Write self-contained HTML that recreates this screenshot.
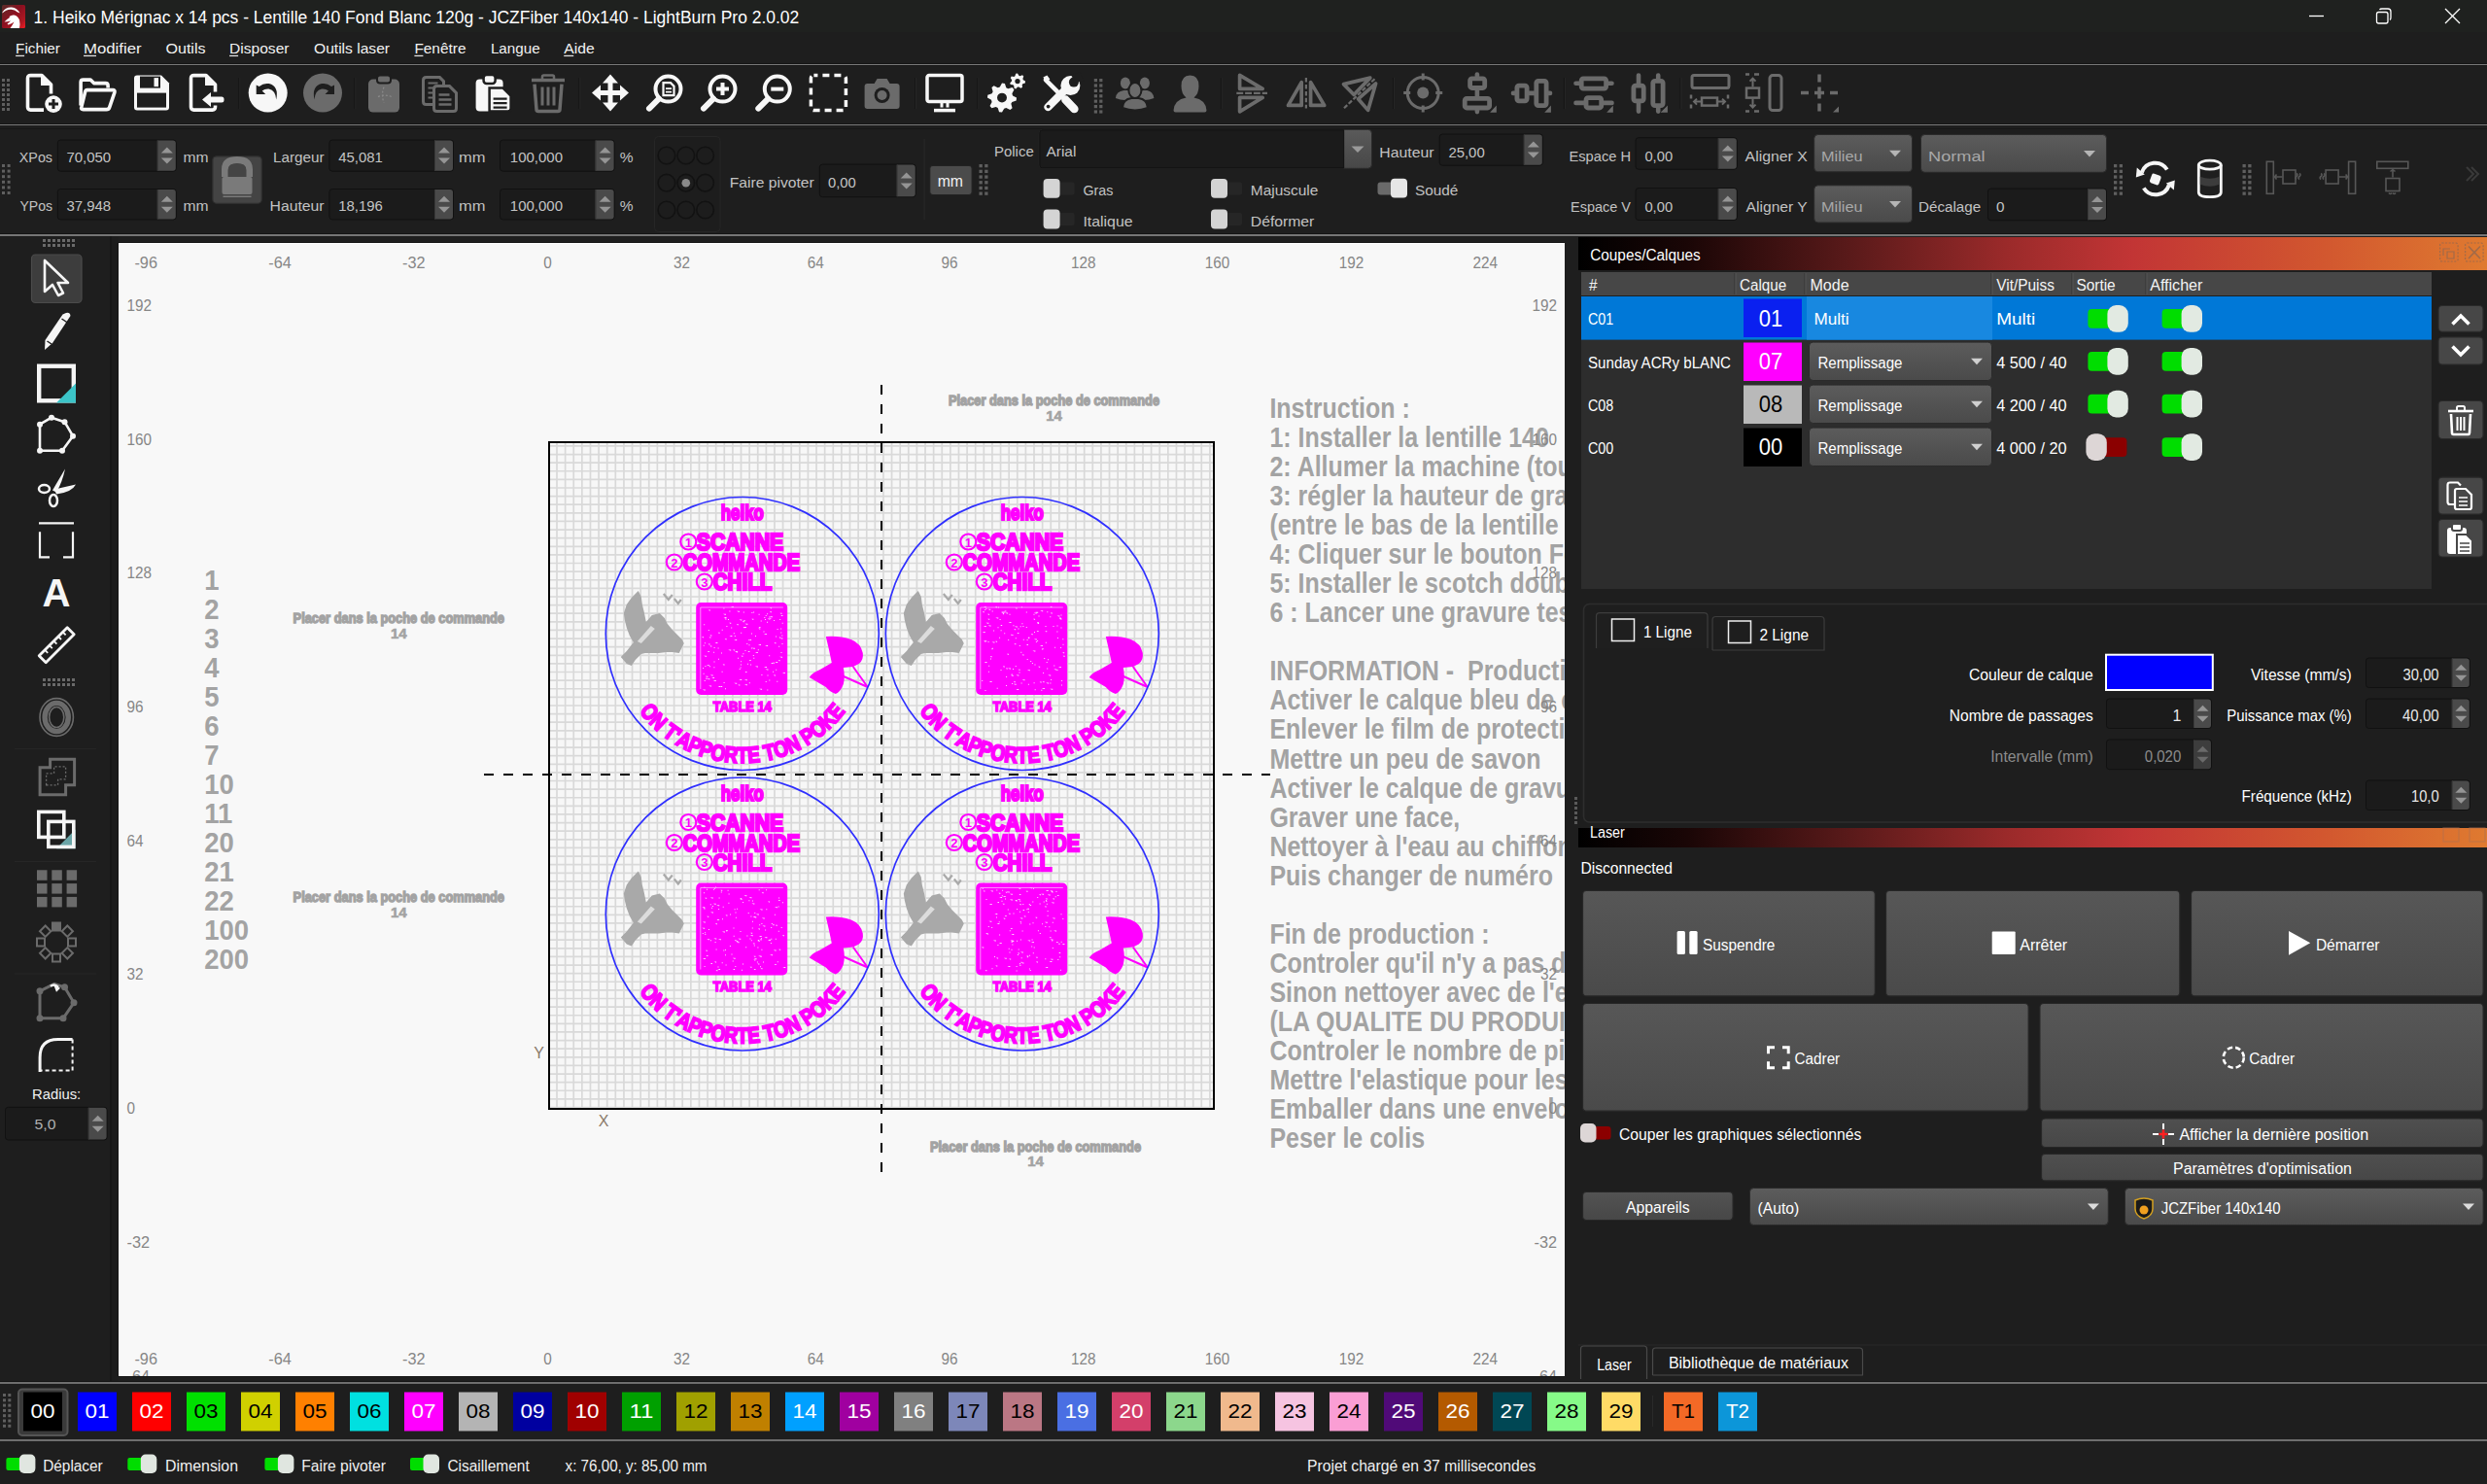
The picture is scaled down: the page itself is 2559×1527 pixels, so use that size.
<!DOCTYPE html>
<html><head><meta charset="utf-8"><title>LightBurn</title>
<style>html,body{margin:0;padding:0;background:#1e1e1e;overflow:hidden;width:2559px;height:1527px}
svg{display:block} text{font-family:"Liberation Sans", sans-serif;white-space:pre}</style></head>
<body><svg width="2559" height="1527" viewBox="0 0 2559 1527">
<rect x="0" y="0" width="2559" height="1527" fill="#1e1e1e" />
<rect x="0" y="0" width="2559" height="33" fill="#1f211f" />
<defs><linearGradient id="appg" x1="0" y1="0" x2="1" y2="1"><stop offset="0" stop-color="#5a2e2a"/><stop offset="0.45" stop-color="#8a1020"/><stop offset="0.8" stop-color="#b01822"/><stop offset="1" stop-color="#f41c24"/></linearGradient></defs>
<rect x="2" y="5" width="24" height="24" fill="url(#appg)" rx="1.5" />
<path d="M2.5 12.5 Q6 7 12 7.5 Q17.5 8 20.5 13.5 L18 12.5 Q15 9.5 11 9.7 Q6 10 2.5 13.5 Z" fill="#ffffff" />
<path d="M10.5 29 Q13 25.5 14.5 22.5 Q12 24.5 8.5 25.5 L7.5 24.5 Q10 22.5 11 21.5 Q8 22.5 4.5 22.5 Q7 19.5 10 18 L9.5 17 Q12 15 14.5 15.5 Q18 16 20 20.5 Q21 25 20 29 Z" fill="#ffffff" />
<text x="34.6" y="24" font-size="18" fill="#ffffff" textLength="787.7" lengthAdjust="spacingAndGlyphs" >1. Heiko Mérignac x 14 pcs - Lentille 140 Fond Blanc 120g - JCZFiber 140x140 - LightBurn Pro 2.0.02</text>
<line x1="2376" y1="16.5" x2="2391" y2="16.5" stroke="#ffffff" stroke-width="1.3" />
<rect x="2445.5" y="12.5" width="11.5" height="11.5" fill="none" rx="2" stroke="#ffffff" stroke-width="1.3" />
<path d="M2448.5 10 Q2449 9 2451 9 L2457 9 Q2460 9 2460 12 L2460 18 Q2460 20 2459 20.5" fill="none" stroke="#ffffff" stroke-width="1.3" />
<line x1="2516" y1="9" x2="2531" y2="24" stroke="#ffffff" stroke-width="1.3" />
<line x1="2531" y1="9" x2="2516" y2="24" stroke="#ffffff" stroke-width="1.3" />
<text x="16.1" y="54.7" font-size="15.5" fill="#f2f2f2" textLength="45.8" lengthAdjust="spacingAndGlyphs" >Fichier</text>
<rect x="16.1" y="56.8" width="9" height="1.3" fill="#e0e0e0" />
<text x="86" y="54.7" font-size="15.5" fill="#f2f2f2" textLength="59.6" lengthAdjust="spacingAndGlyphs" >Modifier</text>
<rect x="86" y="56.8" width="13" height="1.3" fill="#e0e0e0" />
<text x="170.5" y="54.7" font-size="15.5" fill="#f2f2f2" textLength="41.0" lengthAdjust="spacingAndGlyphs" >Outils</text>
<text x="236.1" y="54.7" font-size="15.5" fill="#f2f2f2" textLength="61.4" lengthAdjust="spacingAndGlyphs" >Disposer</text>
<rect x="236.1" y="56.8" width="9" height="1.3" fill="#e0e0e0" />
<text x="323" y="54.7" font-size="15.5" fill="#f2f2f2" textLength="78" lengthAdjust="spacingAndGlyphs" >Outils laser</text>
<text x="426.4" y="54.7" font-size="15.5" fill="#f2f2f2" textLength="53.1" lengthAdjust="spacingAndGlyphs" >Fenêtre</text>
<rect x="426.4" y="56.8" width="9" height="1.3" fill="#e0e0e0" />
<text x="504.9" y="54.7" font-size="15.5" fill="#f2f2f2" textLength="50.7" lengthAdjust="spacingAndGlyphs" >Langue</text>
<text x="580.2" y="54.7" font-size="15.5" fill="#f2f2f2" textLength="31.5" lengthAdjust="spacingAndGlyphs" >Aide</text>
<rect x="580.2" y="56.8" width="10" height="1.3" fill="#e0e0e0" />
<rect x="0" y="65" width="2559" height="1" fill="#161616" />
<rect x="0" y="66" width="2559" height="1" fill="#7a7a7a" />
<rect x="0" y="67" width="2559" height="1" fill="#171717" />
<rect x="0" y="127" width="2559" height="1" fill="#161616" />
<rect x="0" y="128" width="2559" height="1" fill="#7a7a7a" />
<rect x="0" y="132" width="2559" height="1" fill="#171717" />
<rect x="0" y="240" width="2559" height="1" fill="#141414" />
<rect x="0" y="241" width="2559" height="2" fill="#767676" />
<rect x="113" y="243" width="2" height="1178" fill="#171717" />
<rect x="0" y="1421" width="2559" height="1" fill="#141414" />
<rect x="0" y="1422" width="2559" height="2" fill="#6e6e6e" />
<rect x="0" y="1481" width="2559" height="2" fill="#6e6e6e" />
<rect x="2" y="81" width="3" height="3" fill="#5f5f5f" />
<rect x="7" y="81" width="3" height="3" fill="#5f5f5f" />
<rect x="2" y="86" width="3" height="3" fill="#5f5f5f" />
<rect x="7" y="86" width="3" height="3" fill="#5f5f5f" />
<rect x="2" y="91" width="3" height="3" fill="#5f5f5f" />
<rect x="7" y="91" width="3" height="3" fill="#5f5f5f" />
<rect x="2" y="96" width="3" height="3" fill="#5f5f5f" />
<rect x="7" y="96" width="3" height="3" fill="#5f5f5f" />
<rect x="2" y="101" width="3" height="3" fill="#5f5f5f" />
<rect x="7" y="101" width="3" height="3" fill="#5f5f5f" />
<rect x="2" y="106" width="3" height="3" fill="#5f5f5f" />
<rect x="7" y="106" width="3" height="3" fill="#5f5f5f" />
<rect x="2" y="111" width="3" height="3" fill="#5f5f5f" />
<rect x="7" y="111" width="3" height="3" fill="#5f5f5f" />
<g transform="translate(24,75.6) scale(1)"><path d="M4.5 5 Q4.5 2 7.5 2 H19 L28.5 11.5 V21 M21 37.5 H7.5 Q4.5 37.5 4.5 34.5 V5" fill="none" stroke="#f7f7f7" stroke-width="3.6" stroke-linejoin="round"/><path d="M18 2 V12.5 H28.5 Z" fill="#f7f7f7"/><circle cx="31" cy="31.5" r="8.8" fill="#f7f7f7"/><path d="M31 26.5 V36.5 M26 31.5 H36" stroke="#1e1e1e" stroke-width="3"/></g>
<g transform="translate(79.6,75.6) scale(1)"><path d="M3.5 33 V9 Q3.5 6.5 6 6.5 H13.5 L17 10 H29 Q31.5 10 31.5 12.5 V15" fill="none" stroke="#f7f7f7" stroke-width="3.6" stroke-linejoin="round"/><path d="M10 17 H36.5 Q39 17 38.3 19.5 L33 35 Q32.3 37 30 37 H6 Q3.3 37 4.2 34.5 L8 19 Q8.6 17 10 17 Z" fill="none" stroke="#f7f7f7" stroke-width="3.6" stroke-linejoin="round"/></g>
<g transform="translate(136,75.6) scale(1)"><path d="M2 5 Q2 2 5 2 H30 L38 10 V35 Q38 38 35 38 H5 Q2 38 2 35 Z" fill="#f7f7f7"/><rect x="8" y="3" width="21" height="12" fill="#1e1e1e"/><rect x="22.5" y="4.5" width="4.5" height="9" fill="#f7f7f7"/><rect x="5" y="20" width="30" height="15" fill="#1e1e1e"/></g>
<g transform="translate(192,75.6) scale(1)"><path d="M4.5 5 Q4.5 2 7.5 2 H20 L29.5 11.5 V19 M29.5 33 V34.5 Q29.5 37.5 26.5 37.5 H7.5 Q4.5 37.5 4.5 34.5 V5" fill="none" stroke="#f7f7f7" stroke-width="3.6" stroke-linejoin="round"/><path d="M19 2 V12.5 H29.5 Z" fill="#f7f7f7"/><path d="M16 27 L25 19.5 V24 H36 Q38.5 24 38.5 26.5 V27.5 Q38.5 30 36 30 H25 V34.5 Z" fill="#f7f7f7"/></g>
<g transform="translate(255.7,75.6) scale(1)"><circle cx="20" cy="20" r="20" fill="#f7f7f7"/><path d="M8 12 V21.5 H17.5 L14 18 Q17 15.5 21 16 Q28 17.5 28.5 27 Q31.5 13 21 10.5 Q15.5 9.5 11 13.5 Z" fill="#1e1e1e"/></g>
<g transform="translate(312,75.6) scale(1)"><circle cx="20" cy="20" r="20" fill="#6b6b6b"/><path d="M32 12 V21.5 H22.5 L26 18 Q23 15.5 19 16 Q12 17.5 11.5 27 Q8.5 13 19 10.5 Q24.5 9.5 29 13.5 Z" fill="#1e1e1e"/></g>
<g transform="translate(376,75.6) scale(1)"><rect x="3" y="6" width="32" height="34" rx="5" fill="#6b6b6b"/><rect x="12" y="2" width="14" height="8" rx="3" fill="#6b6b6b" stroke="#1e1e1e" stroke-width="2"/><path d="M19 14 Q16 22 19 30 M13 24 Q20 21 27 24" stroke="#8a8a8a" stroke-width="1.2" fill="none" stroke-dasharray="2 2"/></g>
<g transform="translate(432.5,75.6) scale(1)"><path d="M6 4 H20 L24 8 V12 M14 32 H6 Q3 32 3 29 V7 Q3 4 6 4" fill="none" stroke="#6b6b6b" stroke-width="3"/><path d="M8 10 H18 M8 15 H15 M8 20 H13 M8 25 H13" stroke="#6b6b6b" stroke-width="2"/><path d="M17 13 H30 L37 20 V36 Q37 39 34 39 H17 Q14 39 14 36 V16 Q14 13 17 13 Z" fill="none" stroke="#6b6b6b" stroke-width="3"/><path d="M19 22 H30 M19 27 H32 M19 32 H32" stroke="#6b6b6b" stroke-width="2.5"/></g>
<g transform="translate(488.6,75.6) scale(1)"><rect x="1" y="6" width="28" height="33" rx="4" fill="#f7f7f7"/><rect x="9" y="1.5" width="12" height="9" rx="3" fill="#f7f7f7" stroke="#1e1e1e" stroke-width="2.5"/><path d="M15 15 H29 L37 23 V36 Q37 39 34 39 H15 Z" fill="#f7f7f7" stroke="#1e1e1e" stroke-width="2.5"/><path d="M19 26 H33 M19 30.5 H33 M19 35 H33" stroke="#1e1e1e" stroke-width="2.2"/></g>
<g transform="translate(545,75.6) scale(1)"><path d="M2 7 H36" stroke="#6b6b6b" stroke-width="3.5"/><path d="M13 7 V3.5 Q13 2 14.5 2 H23.5 Q25 2 25 3.5 V7" fill="none" stroke="#6b6b6b" stroke-width="2.5"/><path d="M5 11 L7 37 Q7 39 9 39 H29 Q31 39 31 37 L33 11" fill="none" stroke="#6b6b6b" stroke-width="3.5"/><path d="M13 14 V33 M19 14 V33 M25 14 V33" stroke="#6b6b6b" stroke-width="3"/></g>
<g transform="translate(608,75.6) scale(1)"><path d="M20 1 L28 10 H22.5 V17.5 H30 V12 L39 20 L30 28 V22.5 H22.5 V30 H28 L20 39 L12 30 H17.5 V22.5 H10 V28 L1 20 L10 12 V17.5 H17.5 V10 H12 Z" fill="#f7f7f7"/></g>
<g transform="translate(664,75.6) scale(1)"><circle cx="23.5" cy="16" r="13" fill="none" stroke="#f7f7f7" stroke-width="4"/><path d="M14 26 L4 36" stroke="#f7f7f7" stroke-width="6" stroke-linecap="round"/><path d="M18.5 9.5 H26 L29.5 13 V22.5 H18.5 Z" fill="none" stroke="#f7f7f7" stroke-width="2.2"/><path d="M21 15.5 H27 M21 19 H27" stroke="#f7f7f7" stroke-width="1.8"/></g>
<g transform="translate(720,75.6) scale(1)"><circle cx="23.5" cy="16" r="13" fill="none" stroke="#f7f7f7" stroke-width="4"/><path d="M14 26 L4 36" stroke="#f7f7f7" stroke-width="6" stroke-linecap="round"/><path d="M23.5 9.5 V22.5 M17 16 H30" stroke="#f7f7f7" stroke-width="4"/></g>
<g transform="translate(776.3,75.6) scale(1)"><circle cx="23.5" cy="16" r="13" fill="none" stroke="#f7f7f7" stroke-width="4"/><path d="M14 26 L4 36" stroke="#f7f7f7" stroke-width="6" stroke-linecap="round"/><path d="M17 16 H30" stroke="#f7f7f7" stroke-width="4"/></g>
<g transform="translate(832.4,75.6) scale(1)"><rect x="2" y="2" width="36" height="36" rx="3" fill="none" stroke="#f7f7f7" stroke-width="3.5" stroke-dasharray="7 5" stroke-dashoffset="3"/></g>
<g transform="translate(887.6,78) scale(1)"><path d="M2 11 Q2 8 5 8 H12 L15 3 H25 L28 8 H35 Q38 8 38 11 V31 Q38 34 35 34 H5 Q2 34 2 31 Z" fill="#6b6b6b"/><circle cx="20" cy="20" r="8" fill="#1e1e1e"/><circle cx="20" cy="20" r="5" fill="#6b6b6b"/></g>
<g transform="translate(952,75.6) scale(1)"><rect x="2" y="2" width="36" height="27" rx="2" fill="none" stroke="#f7f7f7" stroke-width="3.5"/><path d="M17 30 V35 M23 30 V35" stroke="#f7f7f7" stroke-width="3"/><path d="M9 38 H31" stroke="#f7f7f7" stroke-width="3.5"/></g>
<g transform="translate(1015,75.6) scale(1)"><path d="M31.00 25.00 L30.71 27.93 L26.39 29.31 L25.35 31.25 L26.61 35.61 L24.33 37.47 L20.31 35.39 L18.19 36.03 L16.00 40.00 L13.07 39.71 L11.69 35.39 L9.75 34.35 L5.39 35.61 L3.53 33.33 L5.61 29.31 L4.97 27.19 L1.00 25.00 L1.29 22.07 L5.61 20.69 L6.65 18.75 L5.39 14.39 L7.67 12.53 L11.69 14.61 L13.81 13.97 L16.00 10.00 L18.93 10.29 L20.31 14.61 L22.25 15.65 L26.61 14.39 L28.47 16.67 L26.39 20.69 L27.03 22.81 Z" fill="#f7f7f7"/><circle cx="16" cy="25" r="4.95" fill="#1e1e1e"/><path d="M40.00 8.00 L39.80 9.78 L37.41 10.60 L36.69 11.74 L36.99 14.25 L35.47 15.21 L33.34 13.85 L32.00 14.00 L30.22 15.80 L28.53 15.21 L28.26 12.69 L27.31 11.74 L24.79 11.47 L24.20 9.78 L26.00 8.00 L26.15 6.66 L24.79 4.53 L25.75 3.01 L28.26 3.31 L29.40 2.59 L30.22 0.20 L32.00 0.00 L33.34 2.15 L34.60 2.59 L36.99 1.75 L38.25 3.01 L37.41 5.40 L37.85 6.66 Z" fill="#f7f7f7"/><circle cx="32" cy="8" r="2.64" fill="#1e1e1e"/></g>
<g transform="translate(1071.4,75.6) scale(1)"><path d="M4.5 6.5 L22 24" stroke="#f7f7f7" stroke-width="4.5" stroke-linecap="round"/><path d="M2 4 L6 2 L9 6 L5 9 Z" fill="#f7f7f7"/><path d="M25 27 L34 36.5" stroke="#f7f7f7" stroke-width="8.5" stroke-linecap="round"/><path d="M7 34.5 L25 16.5" stroke="#f7f7f7" stroke-width="8" stroke-linecap="round"/><circle cx="30" cy="12.5" r="10" fill="#f7f7f7"/><circle cx="33.5" cy="9" r="5" fill="#1e1e1e"/><path d="M33.5 9 L31 1 L40 -1 L44 8 Z" fill="#1e1e1e"/><circle cx="7.2" cy="34" r="1.9" fill="#1e1e1e"/></g>
<g transform="translate(1147.4,78) scale(1)"><ellipse cx="10.5" cy="7.5" rx="5" ry="6" fill="#6b6b6b"/><path d="M0.5 23 Q1 16 9 15 L13 15 Q19 16 20 23 Q10 27 0.5 23 Z" fill="#6b6b6b"/><ellipse cx="30.5" cy="7.5" rx="5" ry="6" fill="#6b6b6b"/><path d="M20.5 23 Q21 16 29 15 L33 15 Q39 16 40 23 Q30 27 20.5 23 Z" fill="#6b6b6b"/><ellipse cx="20.5" cy="15" rx="6.5" ry="8" stroke="#1e1e1e" stroke-width="2" fill="#6b6b6b"/><path d="M7.5 33 Q8 24 17 23 L24 23 Q33 24 33.5 33 Q20.5 38 7.5 33 Z" fill="#6b6b6b" stroke="#1e1e1e" stroke-width="2"/></g>
<g transform="translate(1206.5,75.6) scale(1)"><path d="M18 2 Q27 2 27 13 Q27 21 22 25 Q34 27 35 38 Q35 40 33 40 H3 Q1 40 1 38 Q2 27 14 25 Q9 21 9 13 Q9 2 18 2 Z" fill="#6b6b6b"/></g>
<g transform="translate(1272,75.6) scale(1)"><path d="M3.6 1.8 L27.2 15.7 H3.6 Z M3.6 39.2 L27.2 24.8 H3.6 Z" fill="none" stroke="#6b6b6b" stroke-width="3.7" stroke-linejoin="round"/><path d="M0.3 20.3 H32" stroke="#6b6b6b" stroke-width="2.3" stroke-dasharray="6.9 1.9"/></g>
<g transform="translate(1323.7,75.6) scale(1)"><path d="M15.5 9 V32.8 H1.8 Z M24.9 9 V32.8 H39 Z" fill="none" stroke="#6b6b6b" stroke-width="3.7" stroke-linejoin="round"/><path d="M20.2 4.5 V36" stroke="#6b6b6b" stroke-width="2.2" stroke-dasharray="4.5 2.4"/></g>
<g transform="translate(1381.7,75.6) scale(1)"><path d="M0.8 11 L28.1 4.5 L11.4 21.9 Z M33.9 10.3 L25.9 37.8 L15.8 26.2 Z" fill="none" stroke="#6b6b6b" stroke-width="3.7" stroke-linejoin="round"/><path d="M1.3 35.6 L33.9 4.5" stroke="#6b6b6b" stroke-width="2.2" stroke-dasharray="4.5 2"/></g>
<g transform="translate(1444.2,75.6) scale(1)"><circle cx="20" cy="20" r="16" fill="none" stroke="#6b6b6b" stroke-width="3"/><circle cx="20" cy="20" r="6" fill="#6b6b6b"/><path d="M20 0 V7 M20 33 V40 M0 20 H7 M33 20 H40" stroke="#6b6b6b" stroke-width="3"/></g>
<g transform="translate(1502,75.6) scale(1)"><path d="M17.9 1 V39.5" stroke="#6b6b6b" stroke-width="4.6" stroke-linecap="round"/><rect x="10.6" y="5.2" width="15.1" height="9.7" rx="2" fill="#1e1e1e" stroke="#6b6b6b" stroke-width="4.8"/><rect x="5.2" y="25.8" width="25.4" height="9.6" rx="2" fill="#1e1e1e" stroke="#6b6b6b" stroke-width="4.8"/><path d="M31.1 40.2 L37.8 33 V40.2 Z" fill="#6b6b6b"/></g>
<g transform="translate(1556,75.6) scale(1)"><path d="M1 20.3 H39" stroke="#6b6b6b" stroke-width="4.6" stroke-linecap="round"/><rect x="4.9" y="12.5" width="10.2" height="15.7" rx="2" fill="#1e1e1e" stroke="#6b6b6b" stroke-width="4.8"/><rect x="24.8" y="7.7" width="10.3" height="25.3" rx="2" fill="#1e1e1e" stroke="#6b6b6b" stroke-width="4.8"/><path d="M33.2 40.2 L39.9 33 V40.2 Z" fill="#6b6b6b"/></g>
<g transform="translate(1620,75.6) scale(1)"><path d="M1.5 10.1 H38.5 M1.5 30.3 H38.5" stroke="#6b6b6b" stroke-width="4.6" stroke-linecap="round"/><rect x="7.2" y="5.2" width="25.4" height="10.3" rx="2" fill="#1e1e1e" stroke="#6b6b6b" stroke-width="4.8"/><rect x="12" y="25.1" width="15.7" height="10.3" rx="2" fill="#1e1e1e" stroke="#6b6b6b" stroke-width="4.8"/><path d="M33.2 40.2 L39.8 33 V40.2 Z" fill="#6b6b6b"/></g>
<g transform="translate(1677,75.6) scale(1)"><path d="M9 2 V39 M29.2 2 V39" stroke="#6b6b6b" stroke-width="4.6" stroke-linecap="round"/><rect x="3.9" y="12.5" width="10.3" height="15.7" rx="2" fill="#1e1e1e" stroke="#6b6b6b" stroke-width="4.8"/><rect x="23.8" y="7.7" width="10.3" height="25.3" rx="2" fill="#1e1e1e" stroke="#6b6b6b" stroke-width="4.8"/><path d="M31.6 40.2 L38.9 33 V40.2 Z" fill="#6b6b6b"/></g>
<g transform="translate(1739,75.6) scale(1)"><rect x="2" y="2" width="38" height="13" rx="2" fill="none" stroke="#6b6b6b" stroke-width="3"/><path d="M1 22 V26 M1 32 V36 M39 22 V26 M39 32 V36" stroke="#6b6b6b" stroke-width="2.5"/><rect x="12" y="25" width="16" height="8" fill="none" stroke="#6b6b6b" stroke-width="2.5"/><path d="M5 29 H11 M29 29 H35 M7 26 L4 29 L7 32 M33 26 L36 29 L33 32" stroke="#6b6b6b" stroke-width="2" fill="none"/></g>
<g transform="translate(1796,75.6) scale(1)"><path d="M0 1 H4 M9 1 H14 M0 39 H4 M9 39 H14" stroke="#6b6b6b" stroke-width="2.5"/><rect x="1" y="15" width="13" height="10" fill="none" stroke="#6b6b6b" stroke-width="2.5"/><path d="M7.5 5 V14 M7.5 26 V35 M4.5 8 L7.5 5 L10.5 8 M4.5 32 L7.5 35 L10.5 32" stroke="#6b6b6b" stroke-width="2" fill="none"/><rect x="25" y="2" width="12" height="36" rx="3" fill="none" stroke="#6b6b6b" stroke-width="3"/></g>
<g transform="translate(1852,75.6) scale(1)"><path d="M1 20 H9 M15 20 H25 M31 20 H39 M20 1 V9 M20 14 V26 M20 31 V39" stroke="#6b6b6b" stroke-width="3.5"/><path d="M34 40 L40 34 V40 Z" fill="#6b6b6b"/></g>
<rect x="245.3" y="80" width="1" height="32" fill="#151515" />
<rect x="246.3" y="80" width="1" height="32" fill="#262626" />
<rect x="364.3" y="80" width="1" height="32" fill="#151515" />
<rect x="365.3" y="80" width="1" height="32" fill="#262626" />
<rect x="595.4" y="80" width="1" height="32" fill="#151515" />
<rect x="596.4" y="80" width="1" height="32" fill="#262626" />
<rect x="941" y="80" width="1" height="32" fill="#151515" />
<rect x="942" y="80" width="1" height="32" fill="#262626" />
<rect x="1005.3" y="80" width="1" height="32" fill="#151515" />
<rect x="1006.3" y="80" width="1" height="32" fill="#262626" />
<rect x="1255.8" y="80" width="1" height="32" fill="#151515" />
<rect x="1256.8" y="80" width="1" height="32" fill="#262626" />
<rect x="1433" y="80" width="1" height="32" fill="#151515" />
<rect x="1434" y="80" width="1" height="32" fill="#262626" />
<rect x="1608.9" y="80" width="1" height="32" fill="#151515" />
<rect x="1609.9" y="80" width="1" height="32" fill="#262626" />
<rect x="1728.5" y="80" width="1" height="32" fill="#151515" />
<rect x="1729.5" y="80" width="1" height="32" fill="#262626" />
<rect x="1125.8" y="81.0" width="3.2" height="3.2" fill="#5f5f5f" />
<rect x="1131.2" y="81.0" width="3.2" height="3.2" fill="#5f5f5f" />
<rect x="1125.8" y="86.4" width="3.2" height="3.2" fill="#5f5f5f" />
<rect x="1131.2" y="86.4" width="3.2" height="3.2" fill="#5f5f5f" />
<rect x="1125.8" y="91.8" width="3.2" height="3.2" fill="#5f5f5f" />
<rect x="1131.2" y="91.8" width="3.2" height="3.2" fill="#5f5f5f" />
<rect x="1125.8" y="97.2" width="3.2" height="3.2" fill="#5f5f5f" />
<rect x="1131.2" y="97.2" width="3.2" height="3.2" fill="#5f5f5f" />
<rect x="1125.8" y="102.6" width="3.2" height="3.2" fill="#5f5f5f" />
<rect x="1131.2" y="102.6" width="3.2" height="3.2" fill="#5f5f5f" />
<rect x="1125.8" y="108.0" width="3.2" height="3.2" fill="#5f5f5f" />
<rect x="1131.2" y="108.0" width="3.2" height="3.2" fill="#5f5f5f" />
<rect x="1125.8" y="113.4" width="3.2" height="3.2" fill="#5f5f5f" />
<rect x="1131.2" y="113.4" width="3.2" height="3.2" fill="#5f5f5f" />
<rect x="2.0" y="169.0" width="3" height="3" fill="#5f5f5f" />
<rect x="7.6" y="169.0" width="3" height="3" fill="#5f5f5f" />
<rect x="2.0" y="174.6" width="3" height="3" fill="#5f5f5f" />
<rect x="7.6" y="174.6" width="3" height="3" fill="#5f5f5f" />
<rect x="2.0" y="180.2" width="3" height="3" fill="#5f5f5f" />
<rect x="7.6" y="180.2" width="3" height="3" fill="#5f5f5f" />
<rect x="2.0" y="185.8" width="3" height="3" fill="#5f5f5f" />
<rect x="7.6" y="185.8" width="3" height="3" fill="#5f5f5f" />
<rect x="2.0" y="191.4" width="3" height="3" fill="#5f5f5f" />
<rect x="7.6" y="191.4" width="3" height="3" fill="#5f5f5f" />
<rect x="2.0" y="197.0" width="3" height="3" fill="#5f5f5f" />
<rect x="7.6" y="197.0" width="3" height="3" fill="#5f5f5f" />
<text x="19.8" y="166.7" font-size="15.5" fill="#c2c2c2" textLength="34.2" lengthAdjust="spacingAndGlyphs" >XPos</text>
<text x="20.5" y="216.6" font-size="15.5" fill="#c2c2c2" textLength="33.5" lengthAdjust="spacingAndGlyphs" >YPos</text>
<rect x="59.3" y="144.0" width="122.00000000000001" height="32.19999999999999" fill="#1b1b1b" rx="3" stroke="#111111" stroke-width="1" />
<path d="M161.8 144.5 H177.8 Q180.8 144.5 180.8 147.5 V172.7 Q180.8 175.7 177.8 175.7 H161.8 Z" fill="#4a4a4a" />
<rect x="161.8" y="144.5" width="1" height="31.19999999999999" fill="#3a3a3a" />
<path d="M165.8 157.6 L171.8 151.6 L177.8 157.6 Z" fill="#959595" />
<path d="M165.8 162.6 L171.8 168.6 L177.8 162.6 Z" fill="#959595" />
<text x="68.4" y="166.7" font-size="15.5" fill="#c4c4c4" textLength="45.8" lengthAdjust="spacingAndGlyphs" >70,050</text>
<rect x="59.3" y="194.5" width="122.00000000000001" height="31.400000000000006" fill="#1b1b1b" rx="3" stroke="#111111" stroke-width="1" />
<path d="M161.8 195 H177.8 Q180.8 195 180.8 198 V222.4 Q180.8 225.4 177.8 225.4 H161.8 Z" fill="#4a4a4a" />
<rect x="161.8" y="195" width="1" height="30.400000000000006" fill="#3a3a3a" />
<path d="M165.8 207.7 L171.8 201.7 L177.8 207.7 Z" fill="#959595" />
<path d="M165.8 212.7 L171.8 218.7 L177.8 212.7 Z" fill="#959595" />
<text x="68.4" y="216.6" font-size="15.5" fill="#c4c4c4" textLength="45.8" lengthAdjust="spacingAndGlyphs" >37,948</text>
<text x="188.6" y="166.7" font-size="15.5" fill="#c2c2c2" textLength="26" lengthAdjust="spacingAndGlyphs" >mm</text>
<text x="188.6" y="216.6" font-size="15.5" fill="#c2c2c2" textLength="26" lengthAdjust="spacingAndGlyphs" >mm</text>
<rect x="218.8" y="160.8" width="50.5" height="48.5" fill="#444444" rx="4" stroke="#2e2e2e" stroke-width="1.2" />
<path d="M231.5 182 V174 Q231.5 164.5 244 164.5 Q256.5 164.5 256.5 174 V182" fill="none" stroke="#7a7a7a" stroke-width="7" />
<path d="M234.5 182 V175 Q234.5 168.5 244 168.5 Q253.5 168.5 253.5 175 V182" fill="#444444" />
<rect x="228.5" y="182" width="31" height="18" fill="#7a7a7a" rx="2" />
<rect x="229.5" y="201.5" width="29" height="1.5" fill="#7a7a7a" />
<text x="281" y="166.7" font-size="15.5" fill="#c2c2c2" textLength="52.6" lengthAdjust="spacingAndGlyphs" >Largeur</text>
<text x="277.5" y="216.6" font-size="15.5" fill="#c2c2c2" textLength="56.1" lengthAdjust="spacingAndGlyphs" >Hauteur</text>
<rect x="338.9" y="144.0" width="127.60000000000002" height="32.19999999999999" fill="#1b1b1b" rx="3" stroke="#111111" stroke-width="1" />
<path d="M447 144.5 H463 Q466 144.5 466 147.5 V172.7 Q466 175.7 463 175.7 H447 Z" fill="#4a4a4a" />
<rect x="447" y="144.5" width="1" height="31.19999999999999" fill="#3a3a3a" />
<path d="M451.0 157.6 L457.0 151.6 L463.0 157.6 Z" fill="#959595" />
<path d="M451.0 162.6 L457.0 168.6 L463.0 162.6 Z" fill="#959595" />
<text x="348.2" y="166.7" font-size="15.5" fill="#c4c4c4" textLength="45.6" lengthAdjust="spacingAndGlyphs" >45,081</text>
<rect x="338.9" y="194.5" width="127.60000000000002" height="31.400000000000006" fill="#1b1b1b" rx="3" stroke="#111111" stroke-width="1" />
<path d="M447 195 H463 Q466 195 466 198 V222.4 Q466 225.4 463 225.4 H447 Z" fill="#4a4a4a" />
<rect x="447" y="195" width="1" height="30.400000000000006" fill="#3a3a3a" />
<path d="M451.0 207.7 L457.0 201.7 L463.0 207.7 Z" fill="#959595" />
<path d="M451.0 212.7 L457.0 218.7 L463.0 212.7 Z" fill="#959595" />
<text x="348.2" y="216.6" font-size="15.5" fill="#c4c4c4" textLength="45.6" lengthAdjust="spacingAndGlyphs" >18,196</text>
<text x="472" y="166.7" font-size="15.5" fill="#c2c2c2" textLength="27.5" lengthAdjust="spacingAndGlyphs" >mm</text>
<text x="472" y="216.6" font-size="15.5" fill="#c2c2c2" textLength="27.5" lengthAdjust="spacingAndGlyphs" >mm</text>
<rect x="514.5" y="144.0" width="117.60000000000002" height="32.19999999999999" fill="#1b1b1b" rx="3" stroke="#111111" stroke-width="1" />
<path d="M612.6 144.5 H628.6 Q631.6 144.5 631.6 147.5 V172.7 Q631.6 175.7 628.6 175.7 H612.6 Z" fill="#4a4a4a" />
<rect x="612.6" y="144.5" width="1" height="31.19999999999999" fill="#3a3a3a" />
<path d="M616.6 157.6 L622.6 151.6 L628.6 157.6 Z" fill="#959595" />
<path d="M616.6 162.6 L622.6 168.6 L628.6 162.6 Z" fill="#959595" />
<text x="524.8" y="166.7" font-size="15.5" fill="#c4c4c4" textLength="54.2" lengthAdjust="spacingAndGlyphs" >100,000</text>
<rect x="514.5" y="194.5" width="117.60000000000002" height="31.400000000000006" fill="#1b1b1b" rx="3" stroke="#111111" stroke-width="1" />
<path d="M612.6 195 H628.6 Q631.6 195 631.6 198 V222.4 Q631.6 225.4 628.6 225.4 H612.6 Z" fill="#4a4a4a" />
<rect x="612.6" y="195" width="1" height="30.400000000000006" fill="#3a3a3a" />
<path d="M616.6 207.7 L622.6 201.7 L628.6 207.7 Z" fill="#959595" />
<path d="M616.6 212.7 L622.6 218.7 L628.6 212.7 Z" fill="#959595" />
<text x="524.8" y="216.6" font-size="15.5" fill="#c4c4c4" textLength="54.2" lengthAdjust="spacingAndGlyphs" >100,000</text>
<text x="637.7" y="166.7" font-size="15.5" fill="#c2c2c2" textLength="13.8" lengthAdjust="spacingAndGlyphs" >%</text>
<text x="637.7" y="216.6" font-size="15.5" fill="#c2c2c2" textLength="13.8" lengthAdjust="spacingAndGlyphs" >%</text>
<rect x="673.5" y="140.5" width="67.5" height="98" fill="#1d1d1d" rx="4" stroke="#262626" stroke-width="1" />
<circle cx="685.9" cy="160" r="8.8" fill="none" stroke="#121212" stroke-width="1.6"/>
<circle cx="685.9" cy="188.2" r="8.8" fill="none" stroke="#121212" stroke-width="1.6"/>
<circle cx="685.9" cy="216" r="8.8" fill="none" stroke="#121212" stroke-width="1.6"/>
<circle cx="705.8" cy="160" r="8.8" fill="none" stroke="#121212" stroke-width="1.6"/>
<circle cx="705.8" cy="188.2" r="8.8" fill="none" stroke="#121212" stroke-width="1.6"/>
<circle cx="705.8" cy="188.2" r="4.3" fill="#8a8a8a"/>
<circle cx="705.8" cy="216" r="8.8" fill="none" stroke="#121212" stroke-width="1.6"/>
<circle cx="725.6" cy="160" r="8.8" fill="none" stroke="#121212" stroke-width="1.6"/>
<circle cx="725.6" cy="188.2" r="8.8" fill="none" stroke="#121212" stroke-width="1.6"/>
<circle cx="725.6" cy="216" r="8.8" fill="none" stroke="#121212" stroke-width="1.6"/>
<text x="750.8" y="192.5" font-size="15.5" fill="#c2c2c2" textLength="86.9" lengthAdjust="spacingAndGlyphs" >Faire pivoter</text>
<rect x="843.3" y="169.1" width="98.90000000000009" height="33.599999999999994" fill="#1b1b1b" rx="3" stroke="#111111" stroke-width="1" />
<path d="M922.7 169.6 H938.7 Q941.7 169.6 941.7 172.6 V199.2 Q941.7 202.2 938.7 202.2 H922.7 Z" fill="#4a4a4a" />
<rect x="922.7" y="169.6" width="1" height="32.599999999999994" fill="#3a3a3a" />
<path d="M926.7 183.39999999999998 L932.7 177.39999999999998 L938.7 183.39999999999998 Z" fill="#959595" />
<path d="M926.7 188.39999999999998 L932.7 194.39999999999998 L938.7 188.39999999999998 Z" fill="#959595" />
<text x="852" y="192.5" font-size="15.5" fill="#c4c4c4" textLength="28.8" lengthAdjust="spacingAndGlyphs" >0,00</text>
<rect x="950.6" y="143" width="1" height="83" fill="#2a2a2a" />
<rect x="956.7" y="170.5" width="43.5" height="30" fill="#4b4b4b" rx="3" stroke="#222222" stroke-width="1.2" />
<text x="964.7" y="192" font-size="16" fill="#f2f2f2" textLength="26.3" lengthAdjust="spacingAndGlyphs" >mm</text>
<rect x="1007.5" y="169.0" width="3.3" height="3.3" fill="#5f5f5f" />
<rect x="1013.2" y="169.0" width="3.3" height="3.3" fill="#5f5f5f" />
<rect x="1007.5" y="174.7" width="3.3" height="3.3" fill="#5f5f5f" />
<rect x="1013.2" y="174.7" width="3.3" height="3.3" fill="#5f5f5f" />
<rect x="1007.5" y="180.4" width="3.3" height="3.3" fill="#5f5f5f" />
<rect x="1013.2" y="180.4" width="3.3" height="3.3" fill="#5f5f5f" />
<rect x="1007.5" y="186.1" width="3.3" height="3.3" fill="#5f5f5f" />
<rect x="1013.2" y="186.1" width="3.3" height="3.3" fill="#5f5f5f" />
<rect x="1007.5" y="191.8" width="3.3" height="3.3" fill="#5f5f5f" />
<rect x="1013.2" y="191.8" width="3.3" height="3.3" fill="#5f5f5f" />
<rect x="1007.5" y="197.5" width="3.3" height="3.3" fill="#5f5f5f" />
<rect x="1013.2" y="197.5" width="3.3" height="3.3" fill="#5f5f5f" />
<text x="1023" y="161" font-size="15.5" fill="#c2c2c2" textLength="40.7" lengthAdjust="spacingAndGlyphs" >Police</text>
<defs><linearGradient id="polg" x1="0" y1="0" x2="0" y2="1"><stop offset="0" stop-color="#5a5a5a"/><stop offset="1" stop-color="#474747"/></linearGradient></defs>
<rect x="1069.3" y="133.3" width="342.2" height="40" fill="url(#polg)" rx="4" stroke="#2a2a2a" stroke-width="1" />
<path d="M1072.5 133.8 H1382.7 V172.9 H1072.5 Q1069.8 172.9 1069.8 170 V136.5 Q1069.8 133.8 1072.5 133.8 Z" fill="#1b1b1b" stroke="#111111" stroke-width="1" />
<text x="1076.4" y="161" font-size="15.5" fill="#c2c2c2" textLength="31" lengthAdjust="spacingAndGlyphs" >Arial</text>
<path d="M1390.5 150.5 H1403.5 L1397 157 Z" fill="#9a9a9a" />
<rect x="1087.1" y="187.5" width="18.5" height="13" fill="#262626" rx="2" />
<rect x="1073.6" y="184" width="17" height="19.8" fill="#d4d4d4" rx="4" />
<text x="1114.3999999999999" y="201.2" font-size="15.5" fill="#c2c2c2" textLength="31" lengthAdjust="spacingAndGlyphs" >Gras</text>
<rect x="1087.1" y="219.1" width="18.5" height="13" fill="#262626" rx="2" />
<rect x="1073.6" y="215.6" width="17" height="19.8" fill="#d4d4d4" rx="4" />
<text x="1114.3999999999999" y="232.5" font-size="15.5" fill="#c2c2c2" textLength="51.2" lengthAdjust="spacingAndGlyphs" >Italique</text>
<rect x="1259.5" y="187.5" width="18.5" height="13" fill="#262626" rx="2" />
<rect x="1246" y="184" width="17" height="19.8" fill="#d4d4d4" rx="4" />
<text x="1286.8" y="201.2" font-size="15.5" fill="#c2c2c2" textLength="69.5" lengthAdjust="spacingAndGlyphs" >Majuscule</text>
<rect x="1259.5" y="219.1" width="18.5" height="13" fill="#262626" rx="2" />
<rect x="1246" y="215.6" width="17" height="19.8" fill="#d4d4d4" rx="4" />
<text x="1286.8" y="232.5" font-size="15.5" fill="#c2c2c2" textLength="65.5" lengthAdjust="spacingAndGlyphs" >Déformer</text>
<text x="1419.3" y="161.6" font-size="15.5" fill="#c2c2c2" textLength="56.2" lengthAdjust="spacingAndGlyphs" >Hauteur</text>
<rect x="1481.2" y="138.0" width="106.09999999999991" height="32.19999999999999" fill="#1b1b1b" rx="3" stroke="#111111" stroke-width="1" />
<path d="M1567.8 138.5 H1583.8 Q1586.8 138.5 1586.8 141.5 V166.7 Q1586.8 169.7 1583.8 169.7 H1567.8 Z" fill="#4a4a4a" />
<rect x="1567.8" y="138.5" width="1" height="31.19999999999999" fill="#3a3a3a" />
<path d="M1571.8 151.6 L1577.8 145.6 L1583.8 151.6 Z" fill="#959595" />
<path d="M1571.8 156.6 L1577.8 162.6 L1583.8 156.6 Z" fill="#959595" />
<text x="1490.4" y="161.6" font-size="15.5" fill="#c4c4c4" textLength="37.3" lengthAdjust="spacingAndGlyphs" >25,00</text>
<rect x="1417.5" y="187.5" width="18" height="13" fill="#6a6a6a" rx="3" />
<rect x="1431" y="183.8" width="17" height="19.6" fill="#e6e6e6" rx="4" />
<text x="1455.9" y="200.8" font-size="15.5" fill="#c2c2c2" textLength="44.4" lengthAdjust="spacingAndGlyphs" >Soudé</text>
<text x="1614.5" y="165.5" font-size="15.5" fill="#c2c2c2" textLength="63.5" lengthAdjust="spacingAndGlyphs" >Espace H</text>
<text x="1616" y="217.8" font-size="15.5" fill="#c2c2c2" textLength="62" lengthAdjust="spacingAndGlyphs" >Espace V</text>
<rect x="1683.0" y="141.7" width="104.29999999999995" height="32.5" fill="#1b1b1b" rx="3" stroke="#111111" stroke-width="1" />
<path d="M1767.8 142.2 H1783.8 Q1786.8 142.2 1786.8 145.2 V170.7 Q1786.8 173.7 1783.8 173.7 H1767.8 Z" fill="#4a4a4a" />
<rect x="1767.8" y="142.2" width="1" height="31.5" fill="#3a3a3a" />
<path d="M1771.8 155.45 L1777.8 149.45 L1783.8 155.45 Z" fill="#959595" />
<path d="M1771.8 160.45 L1777.8 166.45 L1783.8 160.45 Z" fill="#959595" />
<text x="1692.4" y="165.5" font-size="15.5" fill="#c4c4c4" textLength="28.7" lengthAdjust="spacingAndGlyphs" >0,00</text>
<rect x="1683.0" y="193.5" width="104.29999999999995" height="33" fill="#1b1b1b" rx="3" stroke="#111111" stroke-width="1" />
<path d="M1767.8 194 H1783.8 Q1786.8 194 1786.8 197 V223 Q1786.8 226 1783.8 226 H1767.8 Z" fill="#4a4a4a" />
<rect x="1767.8" y="194" width="1" height="32" fill="#3a3a3a" />
<path d="M1771.8 207.5 L1777.8 201.5 L1783.8 207.5 Z" fill="#959595" />
<path d="M1771.8 212.5 L1777.8 218.5 L1783.8 212.5 Z" fill="#959595" />
<text x="1692.4" y="217.8" font-size="15.5" fill="#c4c4c4" textLength="28.7" lengthAdjust="spacingAndGlyphs" >0,00</text>
<text x="1795.6" y="165.5" font-size="15.5" fill="#c2c2c2" textLength="64.1" lengthAdjust="spacingAndGlyphs" >Aligner X</text>
<text x="1796.6" y="217.8" font-size="15.5" fill="#c2c2c2" textLength="63.1" lengthAdjust="spacingAndGlyphs" >Aligner Y</text>
<defs><linearGradient id="g1" x1="0" y1="0" x2="0" y2="1"><stop offset="0" stop-color="#5c5c5c"/><stop offset="1" stop-color="#4a4a4a"/></linearGradient></defs>
<rect x="1866.7" y="138.5" width="100.79999999999995" height="38.30000000000001" fill="url(#g1)" rx="4" stroke="#2a2a2a" stroke-width="1" />
<path d="M1944 154.65 H1956 L1950 161.15 Z" fill="#b5b5b5" />
<text x="1874" y="165.5" font-size="15.5" fill="#a8a8a8" textLength="42.6" lengthAdjust="spacingAndGlyphs" >Milieu</text>
<defs><linearGradient id="g2" x1="0" y1="0" x2="0" y2="1"><stop offset="0" stop-color="#5c5c5c"/><stop offset="1" stop-color="#4a4a4a"/></linearGradient></defs>
<rect x="1866.7" y="190.8" width="100.79999999999995" height="38.19999999999999" fill="url(#g2)" rx="4" stroke="#2a2a2a" stroke-width="1" />
<path d="M1944 206.9 H1956 L1950 213.4 Z" fill="#b5b5b5" />
<text x="1874" y="217.8" font-size="15.5" fill="#a8a8a8" textLength="42.6" lengthAdjust="spacingAndGlyphs" >Milieu</text>
<defs><linearGradient id="g3" x1="0" y1="0" x2="0" y2="1"><stop offset="0" stop-color="#5c5c5c"/><stop offset="1" stop-color="#4a4a4a"/></linearGradient></defs>
<rect x="1976.5" y="138.5" width="191" height="38.80000000000001" fill="url(#g3)" rx="4" stroke="#2a2a2a" stroke-width="1" />
<path d="M2144 154.9 H2156 L2150 161.4 Z" fill="#b5b5b5" />
<text x="1984" y="165.5" font-size="15.5" fill="#a8a8a8" textLength="58.6" lengthAdjust="spacingAndGlyphs" >Normal</text>
<text x="1974" y="217.8" font-size="15.5" fill="#c2c2c2" textLength="64.2" lengthAdjust="spacingAndGlyphs" >Décalage</text>
<rect x="2045.5" y="194.1" width="122" height="32.70000000000002" fill="#1b1b1b" rx="3" stroke="#111111" stroke-width="1" />
<path d="M2148 194.6 H2164 Q2167 194.6 2167 197.6 V223.3 Q2167 226.3 2164 226.3 H2148 Z" fill="#4a4a4a" />
<rect x="2148" y="194.6" width="1" height="31.700000000000017" fill="#3a3a3a" />
<path d="M2152.0 207.95 L2158.0 201.95 L2164.0 207.95 Z" fill="#959595" />
<path d="M2152.0 212.95 L2158.0 218.95 L2164.0 212.95 Z" fill="#959595" />
<text x="2054" y="217.8" font-size="15.5" fill="#c4c4c4" textLength="8.5" lengthAdjust="spacingAndGlyphs" >0</text>
<rect x="2175.0" y="169.0" width="3.3" height="3.3" fill="#5f5f5f" />
<rect x="2180.7" y="169.0" width="3.3" height="3.3" fill="#5f5f5f" />
<rect x="2175.0" y="174.7" width="3.3" height="3.3" fill="#5f5f5f" />
<rect x="2180.7" y="174.7" width="3.3" height="3.3" fill="#5f5f5f" />
<rect x="2175.0" y="180.4" width="3.3" height="3.3" fill="#5f5f5f" />
<rect x="2180.7" y="180.4" width="3.3" height="3.3" fill="#5f5f5f" />
<rect x="2175.0" y="186.1" width="3.3" height="3.3" fill="#5f5f5f" />
<rect x="2180.7" y="186.1" width="3.3" height="3.3" fill="#5f5f5f" />
<rect x="2175.0" y="191.8" width="3.3" height="3.3" fill="#5f5f5f" />
<rect x="2180.7" y="191.8" width="3.3" height="3.3" fill="#5f5f5f" />
<rect x="2175.0" y="197.5" width="3.3" height="3.3" fill="#5f5f5f" />
<rect x="2180.7" y="197.5" width="3.3" height="3.3" fill="#5f5f5f" />
<g transform="translate(2197.8,165.5)"><path d="M6 12 A14.5 14.5 0 0 1 32 9" fill="none" stroke="#f5f5f5" stroke-width="4"/><path d="M1 7 L9 14 L0 17 Z" fill="#f5f5f5"/><path d="M34 25 A14.5 14.5 0 0 1 8 28" fill="none" stroke="#f5f5f5" stroke-width="4"/><path d="M39 30 L31 23 L40 20 Z" fill="#f5f5f5"/><rect x="15" y="14" width="10" height="10" rx="2" transform="rotate(20 20 19)" fill="#f5f5f5"/></g>
<g transform="translate(2260.3,163.7)"><path d="M2 6 V34 Q2 39 13.5 39 Q25 39 25 34 V6" fill="none" stroke="#f5f5f5" stroke-width="2.8"/><ellipse cx="13.5" cy="6" rx="11.5" ry="4.5" fill="none" stroke="#f5f5f5" stroke-width="2.8"/><path d="M3.5 18 Q13.5 22 23.5 18 V26 Q13.5 30 3.5 26 Z" fill="#3c3c3c"/></g>
<rect x="2307.5" y="169.0" width="3.3" height="3.3" fill="#5f5f5f" />
<rect x="2313.2" y="169.0" width="3.3" height="3.3" fill="#5f5f5f" />
<rect x="2307.5" y="174.7" width="3.3" height="3.3" fill="#5f5f5f" />
<rect x="2313.2" y="174.7" width="3.3" height="3.3" fill="#5f5f5f" />
<rect x="2307.5" y="180.4" width="3.3" height="3.3" fill="#5f5f5f" />
<rect x="2313.2" y="180.4" width="3.3" height="3.3" fill="#5f5f5f" />
<rect x="2307.5" y="186.1" width="3.3" height="3.3" fill="#5f5f5f" />
<rect x="2313.2" y="186.1" width="3.3" height="3.3" fill="#5f5f5f" />
<rect x="2307.5" y="191.8" width="3.3" height="3.3" fill="#5f5f5f" />
<rect x="2313.2" y="191.8" width="3.3" height="3.3" fill="#5f5f5f" />
<rect x="2307.5" y="197.5" width="3.3" height="3.3" fill="#5f5f5f" />
<rect x="2313.2" y="197.5" width="3.3" height="3.3" fill="#5f5f5f" />
<g transform="translate(2331.5,165.5)" stroke="#575757" fill="none" stroke-width="1.6"><rect x="0.8" y="0.8" width="7" height="33"/><rect x="17.5" y="9.5" width="13" height="14"/><path d="M9 16.5 H17 M11 14 L9 16.5 L11 19 M31.5 13 q2 1.5 0 3 q-2 1.5 0 3 M34.5 13 q2 1.5 0 3 q-2 1.5 0 3"/></g>
<g transform="translate(2386.6,165.5)" stroke="#575757" fill="none" stroke-width="1.6"><rect x="30" y="0.8" width="7" height="33"/><rect x="6.5" y="9.5" width="13" height="14"/><path d="M20 16.5 H29 M27 14 L29 16.5 L27 19 M1.5 13 q2 1.5 0 3 q-2 1.5 0 3 M4.5 13 q2 1.5 0 3 q-2 1.5 0 3"/></g>
<g transform="translate(2445,165.5)" stroke="#575757" fill="none" stroke-width="1.6"><rect x="0.8" y="0.8" width="32" height="7"/><rect x="10" y="18" width="14" height="13"/><path d="M17 9 V17 M14.5 11 L17 9 L19.5 11 M13 33 q1.5 2 3 0 M17 33 q1.5 2 3 0"/></g>
<path d="M2538 172 L2545 179 L2538 186 M2543 172 L2550 179 L2543 186" fill="none" stroke="#3a3a3a" stroke-width="2" />
<rect x="44" y="246" width="3" height="3" fill="#6a6a6a" />
<rect x="49" y="246" width="3" height="3" fill="#6a6a6a" />
<rect x="54" y="246" width="3" height="3" fill="#6a6a6a" />
<rect x="59" y="246" width="3" height="3" fill="#6a6a6a" />
<rect x="64" y="246" width="3" height="3" fill="#6a6a6a" />
<rect x="69" y="246" width="3" height="3" fill="#6a6a6a" />
<rect x="74" y="246" width="3" height="3" fill="#6a6a6a" />
<rect x="44" y="251" width="3" height="3" fill="#6a6a6a" />
<rect x="49" y="251" width="3" height="3" fill="#6a6a6a" />
<rect x="54" y="251" width="3" height="3" fill="#6a6a6a" />
<rect x="59" y="251" width="3" height="3" fill="#6a6a6a" />
<rect x="64" y="251" width="3" height="3" fill="#6a6a6a" />
<rect x="69" y="251" width="3" height="3" fill="#6a6a6a" />
<rect x="74" y="251" width="3" height="3" fill="#6a6a6a" />
<rect x="32.5" y="262" width="51.5" height="49.5" fill="#3d3d3d" rx="4" stroke="#4b4b4b" stroke-width="1.2" />
<g transform="translate(44,266)"><path d="M2 2 L2 34 L10 27 L16 38 L21 35.5 L15.5 25 L26 25 Z" fill="none" stroke="#f5f5f5" stroke-width="2.6" stroke-linejoin="round"/></g>
<g transform="translate(44,320)"><path d="M24 2 Q28 1 28.5 5 L10 33 L2 40 L2.5 30 L20.5 3.5 Z" fill="#f5f5f5"/><path d="M4.5 31 L9 34" stroke="#1e1e1e" stroke-width="1.5"/><path d="M19.5 8 L25.5 12" stroke="#1e1e1e" stroke-width="1.5"/></g>
<g transform="translate(38,374.5)"><rect x="2.2" y="2.2" width="35.6" height="35.6" fill="none" stroke="#f5f5f5" stroke-width="4.4"/><path d="M40 20 V40 H20 Z" fill="#3cc4c8"/><path d="M38 26 V38 H26" fill="none" stroke="#f5f5f5" stroke-width="0"/></g>
<path d="M76 376 V412 H40" fill="none" stroke="#f5f5f5" stroke-width="0"/>
<g transform="translate(38,427.7)"><path d="M3 9 L15 2 L28.5 6.5 L37 21 L26 36 L3 36 Z" fill="none" stroke="#f5f5f5" stroke-width="2.6" stroke-linejoin="round"/><circle cx="3" cy="9" r="3" fill="#f5f5f5"/><circle cx="15" cy="2" r="3" fill="#f5f5f5"/><circle cx="28.5" cy="6.5" r="3" fill="#f5f5f5"/><circle cx="37" cy="21" r="3" fill="#f5f5f5"/><circle cx="26" cy="36" r="3" fill="#f5f5f5"/><circle cx="3" cy="36" r="3" fill="#f5f5f5"/></g>
<g transform="translate(38,482.5)"><path d="M16 22 L29 0 Q26 14 20 24 Z" fill="#f5f5f5"/><path d="M18 21 L40 16 Q36 24 20 26 Z" fill="#f5f5f5"/><ellipse cx="7.5" cy="20.5" rx="5.5" ry="4" fill="none" stroke="#f5f5f5" stroke-width="2.5"/><ellipse cx="17" cy="32.5" rx="4" ry="6" fill="none" stroke="#f5f5f5" stroke-width="2.5"/></g>
<g transform="translate(40,537.3)"><path d="M0 1 H36 M1 10 V36 H11 M35 10 V36 H25" fill="none" stroke="#f5f5f5" stroke-width="2.2"/></g>
<text x="58" y="624.1" font-size="40" fill="#f5f5f5" text-anchor="middle" font-weight="bold" textLength="29" lengthAdjust="spacingAndGlyphs" >A</text>
<g transform="translate(38.2,643.8)"><path d="M2 31 L31 2 L38 9 L9 38 Z" fill="none" stroke="#f5f5f5" stroke-width="2.8" stroke-linejoin="round"/><path d="M8.0 25.0 L11.0 28.0" stroke="#f5f5f5" stroke-width="1.8"/><path d="M12.6 20.4 L15.6 23.4" stroke="#f5f5f5" stroke-width="1.8"/><path d="M17.2 15.8 L20.2 18.8" stroke="#f5f5f5" stroke-width="1.8"/><path d="M21.799999999999997 11.200000000000001 L24.799999999999997 14.200000000000001" stroke="#f5f5f5" stroke-width="1.8"/><path d="M26.4 6.600000000000001 L29.4 9.600000000000001" stroke="#f5f5f5" stroke-width="1.8"/><path d="M31.0 2.0 L34.0 5.0" stroke="#f5f5f5" stroke-width="1.8"/></g>
<rect x="44" y="698" width="3" height="3" fill="#6a6a6a" />
<rect x="49" y="698" width="3" height="3" fill="#6a6a6a" />
<rect x="54" y="698" width="3" height="3" fill="#6a6a6a" />
<rect x="59" y="698" width="3" height="3" fill="#6a6a6a" />
<rect x="64" y="698" width="3" height="3" fill="#6a6a6a" />
<rect x="69" y="698" width="3" height="3" fill="#6a6a6a" />
<rect x="74" y="698" width="3" height="3" fill="#6a6a6a" />
<rect x="44" y="703" width="3" height="3" fill="#6a6a6a" />
<rect x="49" y="703" width="3" height="3" fill="#6a6a6a" />
<rect x="54" y="703" width="3" height="3" fill="#6a6a6a" />
<rect x="59" y="703" width="3" height="3" fill="#6a6a6a" />
<rect x="64" y="703" width="3" height="3" fill="#6a6a6a" />
<rect x="69" y="703" width="3" height="3" fill="#6a6a6a" />
<rect x="74" y="703" width="3" height="3" fill="#6a6a6a" />
<ellipse cx="58.2" cy="738" rx="17.2" ry="19.4" fill="none" stroke="#6b6b6b" stroke-width="1.6"/><ellipse cx="58.2" cy="738" rx="12.1" ry="14.6" fill="none" stroke="#6b6b6b" stroke-width="5.4"/><ellipse cx="58.2" cy="738" rx="7.6" ry="10.5" fill="none" stroke="#6b6b6b" stroke-width="1.6"/>
<rect x="15" y="770" width="84" height="1" fill="#262626" />
<g transform="translate(39.6,779.8)"><path d="M1.5 10 H12 V1.5 H37 V28 H28 V38 H1.5 Z" fill="none" stroke="#6b6b6b" stroke-width="3"/><path d="M8 28 V16 H16 V9 H28 V22 H20 V28 Z" fill="none" stroke="#6b6b6b" stroke-width="1.3" stroke-dasharray="2 2"/></g>
<g transform="translate(38,833.6)"><rect x="1.8" y="1.8" width="26" height="26" fill="none" stroke="#f5f5f5" stroke-width="3.6"/><path d="M39.6 20 V39.6 H20 Z" fill="#6aa6a8"/><rect x="11.8" y="11.8" width="26" height="26" fill="none" stroke="#f5f5f5" stroke-width="3.6"/></g>
<rect x="15" y="886" width="84" height="1" fill="#262626" />
<rect x="38.0" y="895.3" width="10.5" height="10.5" fill="#6b6b6b" />
<rect x="38.0" y="909.0999999999999" width="10.5" height="10.5" fill="#6b6b6b" />
<rect x="38.0" y="922.9" width="10.5" height="10.5" fill="#6b6b6b" />
<rect x="53.3" y="895.3" width="10.5" height="10.5" fill="#6b6b6b" />
<rect x="53.3" y="909.0999999999999" width="10.5" height="10.5" fill="#6b6b6b" />
<rect x="53.3" y="922.9" width="10.5" height="10.5" fill="#6b6b6b" />
<rect x="68.6" y="895.3" width="10.5" height="10.5" fill="#6b6b6b" />
<rect x="68.6" y="909.0999999999999" width="10.5" height="10.5" fill="#6b6b6b" />
<rect x="68.6" y="922.9" width="10.5" height="10.5" fill="#6b6b6b" />
<rect x="53.0" y="948.5" width="10" height="10" fill="#6b6b6b" />
<rect x="65.31" y="954.19" width="8" height="8" fill="none" stroke="#6b6b6b" stroke-width="2" transform="rotate(45 69.31 958.19)"/>
<rect x="70.00" y="965.50" width="8" height="8" fill="none" stroke="#6b6b6b" stroke-width="2" transform="rotate(0 74.00 969.50)"/>
<rect x="65.31" y="976.81" width="8" height="8" fill="none" stroke="#6b6b6b" stroke-width="2" transform="rotate(45 69.31 980.81)"/>
<rect x="54.00" y="981.50" width="8" height="8" fill="none" stroke="#6b6b6b" stroke-width="2" transform="rotate(0 58.00 985.50)"/>
<rect x="42.69" y="976.81" width="8" height="8" fill="none" stroke="#6b6b6b" stroke-width="2" transform="rotate(45 46.69 980.81)"/>
<rect x="38.00" y="965.50" width="8" height="8" fill="none" stroke="#6b6b6b" stroke-width="2" transform="rotate(0 42.00 969.50)"/>
<rect x="42.69" y="954.19" width="8" height="8" fill="none" stroke="#6b6b6b" stroke-width="2" transform="rotate(45 46.69 958.19)"/>
<rect x="15" y="1001.5" width="84" height="1" fill="#262626" />
<g transform="translate(38,1011.8)"><path d="M3 8 L18 0.5 L28.5 4 L38 20 L27 36 L3 36 Z" fill="none" stroke="#6b6b6b" stroke-width="3" stroke-linejoin="round"/><circle cx="3" cy="8" r="3.5" fill="#6b6b6b"/><circle cx="28.5" cy="4" r="3.5" fill="#6b6b6b"/><circle cx="38" cy="20" r="3.5" fill="#6b6b6b"/><circle cx="27" cy="36" r="3.5" fill="#6b6b6b"/><circle cx="3" cy="36" r="3.5" fill="#6b6b6b"/><path d="M17 1 L24 5 L20 9 Z" fill="#f5f5f5"/><path d="M14 3 Q18 0 22 4" stroke="#f5f5f5" stroke-width="2.5" fill="none"/></g>
<g transform="translate(39.6,1067.9)"><path d="M1.5 35 V20 Q1.5 1.5 20 1.5 H35" fill="none" stroke="#f5f5f5" stroke-width="3"/><path d="M35 1.5 V33.5 H1.5" fill="none" stroke="#f5f5f5" stroke-width="2" stroke-dasharray="4 3"/></g>
<text x="33" y="1130.6" font-size="15.5" fill="#f0f0f0" textLength="50.2" lengthAdjust="spacingAndGlyphs" >Radius:</text>
<rect x="5.5" y="1139.3" width="104.6" height="33.700000000000045" fill="#1b1b1b" rx="3" stroke="#111111" stroke-width="1" />
<path d="M90.8 1139.8 H106.6 Q109.6 1139.8 109.6 1142.8 V1169.5 Q109.6 1172.5 106.6 1172.5 H90.8 Z" fill="#4a4a4a" />
<rect x="90.8" y="1139.8" width="1" height="32.700000000000045" fill="#3a3a3a" />
<path d="M94.7 1153.65 L100.7 1147.65 L106.7 1153.65 Z" fill="#959595" />
<path d="M94.7 1158.65 L100.7 1164.65 L106.7 1158.65 Z" fill="#959595" />
<text x="46.5" y="1162" font-size="15.5" fill="#b0b0b0" text-anchor="middle" textLength="22" lengthAdjust="spacingAndGlyphs" >5,0</text>
<rect x="115" y="243" width="7" height="1178" fill="#1c1c1c" />
<rect x="121" y="249" width="1490" height="1168" fill="#151515" />
<rect x="122" y="250" width="1488" height="1166" fill="#f8f8f8" />
<rect x="122" y="250" width="1488" height="1" fill="#ffffff" />
<rect x="122" y="250" width="1" height="1166" fill="#ffffff" />
<rect x="1610" y="243" width="14" height="1178" fill="#1e1e1e" />
<defs><clipPath id="cv"><rect x="122" y="250" width="1488" height="1166"/></clipPath></defs>
<g clip-path="url(#cv)">
<rect x="566" y="456" width="682" height="684" fill="#f7f7f7" />
<path d="M573.01 456 V1140 M581.63 456 V1140 M590.24 456 V1140 M598.86 456 V1140 M607.47 456 V1140 M616.08 456 V1140 M624.70 456 V1140 M633.31 456 V1140 M641.93 456 V1140 M650.54 456 V1140 M659.15 456 V1140 M667.77 456 V1140 M676.38 456 V1140 M685.00 456 V1140 M693.61 456 V1140 M702.22 456 V1140 M710.84 456 V1140 M719.45 456 V1140 M728.07 456 V1140 M736.68 456 V1140 M745.29 456 V1140 M753.91 456 V1140 M762.52 456 V1140 M771.14 456 V1140 M779.75 456 V1140 M788.36 456 V1140 M796.98 456 V1140 M805.59 456 V1140 M814.21 456 V1140 M822.82 456 V1140 M831.43 456 V1140 M840.05 456 V1140 M848.66 456 V1140 M857.28 456 V1140 M865.89 456 V1140 M874.50 456 V1140 M883.12 456 V1140 M891.73 456 V1140 M900.35 456 V1140 M908.96 456 V1140 M917.57 456 V1140 M926.19 456 V1140 M934.80 456 V1140 M943.42 456 V1140 M952.03 456 V1140 M960.64 456 V1140 M969.26 456 V1140 M977.87 456 V1140 M986.49 456 V1140 M995.10 456 V1140 M1003.71 456 V1140 M1012.33 456 V1140 M1020.94 456 V1140 M1029.56 456 V1140 M1038.17 456 V1140 M1046.78 456 V1140 M1055.40 456 V1140 M1064.01 456 V1140 M1072.63 456 V1140 M1081.24 456 V1140 M1089.85 456 V1140 M1098.47 456 V1140 M1107.08 456 V1140 M1115.70 456 V1140 M1124.31 456 V1140 M1132.92 456 V1140 M1141.54 456 V1140 M1150.15 456 V1140 M1158.77 456 V1140 M1167.38 456 V1140 M1175.99 456 V1140 M1184.61 456 V1140 M1193.22 456 V1140 M1201.84 456 V1140 M1210.45 456 V1140 M1219.06 456 V1140 M1227.68 456 V1140 M1236.29 456 V1140 M1244.91 456 V1140 M566 1139.50 H1248 M566 1130.88 H1248 M566 1122.27 H1248 M566 1113.65 H1248 M566 1105.04 H1248 M566 1096.42 H1248 M566 1087.81 H1248 M566 1079.19 H1248 M566 1070.58 H1248 M566 1061.96 H1248 M566 1053.35 H1248 M566 1044.73 H1248 M566 1036.12 H1248 M566 1027.51 H1248 M566 1018.89 H1248 M566 1010.27 H1248 M566 1001.66 H1248 M566 993.04 H1248 M566 984.43 H1248 M566 975.82 H1248 M566 967.20 H1248 M566 958.59 H1248 M566 949.97 H1248 M566 941.36 H1248 M566 932.74 H1248 M566 924.12 H1248 M566 915.51 H1248 M566 906.89 H1248 M566 898.28 H1248 M566 889.66 H1248 M566 881.05 H1248 M566 872.43 H1248 M566 863.82 H1248 M566 855.20 H1248 M566 846.59 H1248 M566 837.97 H1248 M566 829.36 H1248 M566 820.75 H1248 M566 812.13 H1248 M566 803.51 H1248 M566 794.90 H1248 M566 786.28 H1248 M566 777.67 H1248 M566 769.06 H1248 M566 760.44 H1248 M566 751.83 H1248 M566 743.21 H1248 M566 734.60 H1248 M566 725.98 H1248 M566 717.37 H1248 M566 708.75 H1248 M566 700.13 H1248 M566 691.52 H1248 M566 682.90 H1248 M566 674.29 H1248 M566 665.67 H1248 M566 657.06 H1248 M566 648.44 H1248 M566 639.83 H1248 M566 631.21 H1248 M566 622.60 H1248 M566 613.99 H1248 M566 605.37 H1248 M566 596.75 H1248 M566 588.14 H1248 M566 579.52 H1248 M566 570.91 H1248 M566 562.29 H1248 M566 553.68 H1248 M566 545.06 H1248 M566 536.45 H1248 M566 527.84 H1248 M566 519.22 H1248 M566 510.61 H1248 M566 501.99 H1248 M566 493.38 H1248 M566 484.76 H1248 M566 476.14 H1248 M566 467.53 H1248 M566 458.91 H1248" stroke="#d9d9d9" stroke-width="1.7" fill="none"/>
<rect x="565" y="455" width="684" height="686" fill="none" stroke="#000000" stroke-width="2" />
<line x1="907" y1="396" x2="907" y2="1206" stroke="#000000" stroke-width="2" stroke-dasharray="10 10"/>
<line x1="498" y1="797" x2="1307" y2="797" stroke="#000000" stroke-width="2" stroke-dasharray="10 10"/>
<g fill="#a3a3a3" font-weight="bold" font-size="28.6">
<text transform="translate(210.3,607.0) scale(0.96,1)">1</text>
<text transform="translate(210.3,637.0) scale(0.96,1)">2</text>
<text transform="translate(210.3,667.0) scale(0.96,1)">3</text>
<text transform="translate(210.3,697.0) scale(0.96,1)">4</text>
<text transform="translate(210.3,727.0) scale(0.96,1)">5</text>
<text transform="translate(210.3,757.0) scale(0.96,1)">6</text>
<text transform="translate(210.3,787.0) scale(0.96,1)">7</text>
<text transform="translate(210.3,817.0) scale(0.96,1)">10</text>
<text transform="translate(210.3,847.0) scale(0.96,1)">11</text>
<text transform="translate(210.3,877.0) scale(0.96,1)">20</text>
<text transform="translate(210.3,907.0) scale(0.96,1)">21</text>
<text transform="translate(210.3,937.0) scale(0.96,1)">22</text>
<text transform="translate(210.3,967.0) scale(0.96,1)">100</text>
<text transform="translate(210.3,997.0) scale(0.96,1)">200</text>
</g>
<g fill="#a3a3a3" font-weight="bold" font-size="29">
<text transform="translate(1306.4,430.0) scale(0.862,1)">Instruction :</text>
<text transform="translate(1306.4,460.0) scale(0.862,1)">1: Installer la lentille 140</text>
<text transform="translate(1306.4,490.1) scale(0.862,1)">2: Allumer la machine (touche verte)</text>
<text transform="translate(1306.4,520.1) scale(0.862,1)">3: régler la hauteur de gravure</text>
<text transform="translate(1306.4,550.2) scale(0.862,1)">(entre le bas de la lentille et la pièce)</text>
<text transform="translate(1306.4,580.2) scale(0.862,1)">4: Cliquer sur le bouton Focus</text>
<text transform="translate(1306.4,610.2) scale(0.862,1)">5: Installer le scotch double face</text>
<text transform="translate(1306.4,640.3) scale(0.862,1)">6 : Lancer une gravure test</text>
<text transform="translate(1306.4,700.4) scale(0.862,1)">INFORMATION -  Production</text>
<text transform="translate(1306.4,730.4) scale(0.862,1)">Activer le calque bleu de cadrage</text>
<text transform="translate(1306.4,760.4) scale(0.862,1)">Enlever le film de protection</text>
<text transform="translate(1306.4,790.5) scale(0.862,1)">Mettre un peu de savon</text>
<text transform="translate(1306.4,820.5) scale(0.862,1)">Activer le calque de gravure</text>
<text transform="translate(1306.4,850.6) scale(0.862,1)">Graver une face,</text>
<text transform="translate(1306.4,880.6) scale(0.862,1)">Nettoyer à l&#x27;eau au chiffon</text>
<text transform="translate(1306.4,910.6) scale(0.862,1)">Puis changer de numéro</text>
<text transform="translate(1306.4,970.7) scale(0.862,1)">Fin de production :</text>
<text transform="translate(1306.4,1000.8) scale(0.862,1)">Controler qu&#x27;il n&#x27;y a pas de</text>
<text transform="translate(1306.4,1030.8) scale(0.862,1)">Sinon nettoyer avec de l&#x27;eau</text>
<text transform="translate(1306.4,1060.8) scale(0.862,1)">(LA QUALITE DU PRODUIT)</text>
<text transform="translate(1306.4,1090.9) scale(0.862,1)">Controler le nombre de pièces</text>
<text transform="translate(1306.4,1120.9) scale(0.862,1)">Mettre l&#x27;elastique pour les</text>
<text transform="translate(1306.4,1151.0) scale(0.862,1)">Emballer dans une enveloppe</text>
<text transform="translate(1306.4,1181.0) scale(0.862,1)">Peser le colis</text>
</g>
<text x="301.6" y="641" font-size="15" fill="#a3a3a3" font-weight="bold" textLength="217.4" lengthAdjust="spacingAndGlyphs" stroke="#a3a3a3" stroke-width="1.4">Placer dans la poche de commande</text>
<text x="410.3" y="656.5" font-size="15" fill="#a3a3a3" text-anchor="middle" font-weight="bold" stroke="#a3a3a3" stroke-width="0.6">14</text>
<text x="301.6" y="928" font-size="15" fill="#a3a3a3" font-weight="bold" textLength="217.4" lengthAdjust="spacingAndGlyphs" stroke="#a3a3a3" stroke-width="1.4">Placer dans la poche de commande</text>
<text x="410.3" y="943.5" font-size="15" fill="#a3a3a3" text-anchor="middle" font-weight="bold" stroke="#a3a3a3" stroke-width="0.6">14</text>
<text x="976" y="417.4" font-size="15" fill="#a3a3a3" font-weight="bold" textLength="217" lengthAdjust="spacingAndGlyphs" stroke="#a3a3a3" stroke-width="1.4">Placer dans la poche de commande</text>
<text x="1084.5" y="432.9" font-size="15" fill="#a3a3a3" text-anchor="middle" font-weight="bold" stroke="#a3a3a3" stroke-width="0.6">14</text>
<text x="957" y="1184.5" font-size="15" fill="#a3a3a3" font-weight="bold" textLength="217" lengthAdjust="spacingAndGlyphs" stroke="#a3a3a3" stroke-width="1.4">Placer dans la poche de commande</text>
<text x="1065.5" y="1200.0" font-size="15" fill="#a3a3a3" text-anchor="middle" font-weight="bold" stroke="#a3a3a3" stroke-width="0.6">14</text>
<g transform="translate(763.8,652)">
<path d="M-107 -44 L-104 -38 L-103 -30 L-101 -22 L-99 -12 L-93 -19 L-85 -21 L-80 -16 L-77 -10 L-72 -4 L-68 0 L-62 6 L-60 10 L-63 16 L-65 20 L-72 19 L-78 19 L-86 20 L-94 20 L-100 20 L-104 21 L-110 27 L-114 33 L-119 31 L-125 24 L-119 18 L-112 9 L-116 2 L-119 -6 L-121 -14 L-122 -21 L-119 -30 L-114 -37 Z" fill="#a9a9a9"/>
<path d="M-108 8 L-94 -8 L-90 -5 L-104 10 Z" fill="#e8e8e8" opacity="0.8"/>
<path d="M-81 -41 L-76 -35 L-72 -40 M-70 -36 L-66 -31 L-63 -35" fill="none" stroke="#a9a9a9" stroke-width="2.2"/>
<path d="M86 3 Q100 2 112 6 Q122 10 124 20 Q125 27 120 31 L114 34 L104 35 Q106 44 104 52 Q101 60 96 62 Q90 60 86 55 L69 45 Q72 40 80 37 L92 30 Q89 15 86 3 Z" fill="#ff00ff"/>
<path d="M102 43 L129 55 M114 34 L129 55" stroke="#ff00ff" stroke-width="2" fill="none"/>
<rect x="-47.6" y="-32" width="94" height="95" rx="5" fill="#ff00ff"/>
<path d="M-14.8 -15.0 h1 v1 h-1z M-35.9 18.1 h2 v1 h-1z M7.0 50.2 h1 v1 h-1z M-38.9 9.3 h1 v1 h-1z M-21.8 19.4 h1 v1 h-1z M27.5 -17.4 h1 v1 h-1z M11.0 22.1 h1 v1 h-1z M6.5 6.1 h1 v1 h-1z M-38.1 45.8 h2 v1 h-1z M-6.8 18.5 h2 v1 h-1z M5.1 30.7 h1 v1 h-1z M6.9 26.9 h2 v1 h-1z M-33.8 33.2 h1 v1 h-1z M10.0 14.7 h3 v1 h-1z M23.3 12.0 h3 v1 h-1z M-11.6 -6.6 h1 v1 h-1z M16.7 -7.0 h2 v1 h-1z M2.1 47.3 h3 v1 h-1z M-17.8 56.3 h1 v1 h-1z M1.0 -13.8 h2 v1 h-1z M-29.2 14.1 h1 v1 h-1z M38.8 -21.3 h2 v1 h-1z M-13.4 2.1 h3 v1 h-1z M6.7 11.2 h1 v1 h-1z M37.4 12.8 h1 v1 h-1z M-36.9 32.3 h3 v1 h-1z M-18.1 5.2 h2 v1 h-1z M-40.1 11.7 h1 v1 h-1z M9.3 14.5 h1 v1 h-1z M22.5 -16.9 h1 v1 h-1z M-8.6 50.8 h3 v1 h-1z M-35.2 10.6 h2 v1 h-1z M32.2 42.5 h2 v1 h-1z M17.3 56.8 h3 v1 h-1z M38.4 -15.0 h1 v1 h-1z M-29.3 28.6 h1 v1 h-1z M-1.3 22.7 h2 v1 h-1z M-18.3 -15.5 h2 v1 h-1z M9.2 -0.6 h1 v1 h-1z M16.0 16.3 h1 v1 h-1z M-3.6 46.9 h3 v1 h-1z M-8.6 5.9 h3 v1 h-1z M11.3 -22.6 h1 v1 h-1z M40.7 9.9 h1 v1 h-1z M-13.4 -23.5 h1 v1 h-1z M5.6 18.1 h2 v1 h-1z M9.6 -22.0 h1 v1 h-1z M9.6 -15.2 h2 v1 h-1z M38.3 23.8 h3 v1 h-1z M-31.7 45.0 h3 v1 h-1z M-1.6 -1.2 h1 v1 h-1z M-33.4 1.5 h2 v1 h-1z M-1.8 31.5 h1 v1 h-1z M-24.8 53.9 h2 v1 h-1z M-29.7 18.7 h1 v1 h-1z M21.7 -2.4 h1 v1 h-1z M16.5 -5.5 h2 v1 h-1z M34.3 2.6 h1 v1 h-1z M2.7 39.0 h2 v1 h-1z M11.5 24.7 h1 v1 h-1z M25.7 42.4 h1 v1 h-1z M-25.2 14.4 h1 v1 h-1z M41.1 39.9 h3 v1 h-1z M-20.2 31.6 h2 v1 h-1z M-4.4 52.6 h2 v1 h-1z M38.2 3.4 h1 v1 h-1z M-33.4 12.4 h2 v1 h-1z M-24.8 25.7 h1 v1 h-1z M-1.7 28.2 h1 v1 h-1z M28.1 -17.7 h3 v1 h-1z M23.7 36.5 h3 v1 h-1z M32.7 9.3 h2 v1 h-1z M-34.7 53.4 h3 v1 h-1z M-3.1 35.9 h1 v1 h-1z M18.9 -13.4 h1 v1 h-1z M-39.7 22.8 h3 v1 h-1z M25.7 -15.4 h3 v1 h-1z M13.2 2.1 h1 v1 h-1z M-40.2 40.7 h1 v1 h-1z M2.2 52.3 h3 v1 h-1z M40.9 -11.2 h1 v1 h-1z M-39.6 -9.7 h1 v1 h-1z M22.1 0.0 h3 v1 h-1z M28.1 -22.8 h2 v1 h-1z M33.4 29.0 h3 v1 h-1z M27.5 47.5 h1 v1 h-1z M2.7 17.0 h1 v1 h-1z M31.3 38.8 h1 v1 h-1z M23.2 -15.1 h1 v1 h-1z M-2.2 34.4 h1 v1 h-1z M-14.6 16.6 h3 v1 h-1z M23.9 -18.9 h1 v1 h-1z M-21.1 -4.2 h1 v1 h-1z M0.6 20.3 h1 v1 h-1z M-4.8 24.7 h1 v1 h-1z M16.2 10.9 h3 v1 h-1z M0.7 -6.7 h2 v1 h-1z M35.5 48.8 h1 v1 h-1z M28.6 -16.2 h1 v1 h-1z M-9.0 -0.8 h1 v1 h-1z M-6.0 -9.7 h2 v1 h-1z M23.9 49.1 h1 v1 h-1z M36.9 27.3 h2 v1 h-1z M-30.0 47.9 h3 v1 h-1z M-23.6 53.9 h3 v1 h-1z M32.3 -14.0 h1 v1 h-1z M-28.4 9.1 h3 v1 h-1z M-13.5 -11.2 h2 v1 h-1z M-34.3 3.5 h2 v1 h-1z M4.5 9.9 h1 v1 h-1z M-9.7 16.5 h2 v1 h-1z M1.0 -22.5 h1 v1 h-1z M39.6 -19.0 h2 v1 h-1z M-19.2 49.9 h1 v1 h-1z M-19.3 -16.9 h3 v1 h-1z M29.4 30.1 h2 v1 h-1z M-7.9 18.1 h3 v1 h-1z M16.8 -20.3 h1 v1 h-1z M25.2 -12.2 h1 v1 h-1z M-19.4 -26.6 h1 v1 h-1z M25.3 -20.8 h1 v1 h-1z M-36.4 46.2 h3 v1 h-1z M-41.0 57.5 h3 v1 h-1z M35.8 -5.0 h1 v1 h-1z M-38.4 33.0 h1 v1 h-1z M39.4 -5.5 h1 v1 h-1z M-25.1 -1.2 h2 v1 h-1z M2.6 -10.3 h3 v1 h-1z M0.0 -12.7 h2 v1 h-1z M25.5 57.5 h1 v1 h-1z M-40.7 35.0 h1 v1 h-1z M1.2 -6.9 h3 v1 h-1z M-33.1 42.4 h3 v1 h-1z M13.1 18.9 h3 v1 h-1z M39.5 -1.5 h1 v1 h-1z M40.5 1.5 h1 v1 h-1z M-8.0 1.9 h1 v1 h-1z M28.3 -26.8 h2 v1 h-1z M-5.8 -23.2 h3 v1 h-1z M31.1 29.7 h2 v1 h-1z M8.3 31.6 h1 v1 h-1z M-3.4 -14.5 h3 v1 h-1z M-41.7 3.3 h2 v1 h-1z M39.7 19.0 h1 v1 h-1z M-39.1 47.9 h1 v1 h-1z M-12.0 -27.9 h3 v1 h-1z M-35.0 -4.0 h1 v1 h-1z M-21.2 38.8 h1 v1 h-1z M-19.8 -20.3 h3 v1 h-1z M7.3 5.9 h2 v1 h-1z M-16.4 -8.0 h1 v1 h-1z M13.2 33.6 h3 v1 h-1z M22.2 34.0 h3 v1 h-1z M-29.4 34.3 h1 v1 h-1z M-38.3 43.8 h3 v1 h-1z M19.6 41.9 h1 v1 h-1z M34.4 36.7 h1 v1 h-1z M27.4 22.2 h1 v1 h-1z M-34.9 -24.4 h2 v1 h-1z M38.6 4.4 h3 v1 h-1z" fill="#ffffff" opacity="0.85"/>
<path d="M-43 -27 H42 M-43 -27 V57" stroke="#ffb0ff" stroke-width="0.8" fill="none"/>
<text x="0" y="-117" font-size="22" text-anchor="middle" textLength="44" lengthAdjust="spacingAndGlyphs" fill="#ff00ff" stroke="#ff00ff" font-weight="bold" stroke-width="2.2">heiko</text>
<text x="-47" y="-86" font-size="23" textLength="89.4" lengthAdjust="spacingAndGlyphs" fill="#ff00ff" stroke="#ff00ff" font-weight="bold" stroke-width="2.4">SCANNE</text>
<circle cx="-55.5" cy="-94.5" r="8" fill="none" stroke="#ff00ff" stroke-width="2.2"/>
<text x="-55.5" y="-89.5" font-size="13" text-anchor="middle" font-weight="bold" fill="#ff00ff">1</text>
<text x="-61" y="-65" font-size="23" textLength="120.4" lengthAdjust="spacingAndGlyphs" fill="#ff00ff" stroke="#ff00ff" font-weight="bold" stroke-width="2.4">COMMANDE</text>
<circle cx="-70" cy="-73.5" r="8" fill="none" stroke="#ff00ff" stroke-width="2.2"/>
<text x="-70" y="-68.5" font-size="13" text-anchor="middle" font-weight="bold" fill="#ff00ff">2</text>
<text x="-30" y="-45" font-size="23" textLength="60.4" lengthAdjust="spacingAndGlyphs" fill="#ff00ff" stroke="#ff00ff" font-weight="bold" stroke-width="2.4">CHILL</text>
<circle cx="-39" cy="-53.5" r="8" fill="none" stroke="#ff00ff" stroke-width="2.2"/>
<text x="-39" y="-48.5" font-size="13" text-anchor="middle" font-weight="bold" fill="#ff00ff">3</text>
<text x="0" y="79.5" font-size="15" text-anchor="middle" textLength="60" lengthAdjust="spacingAndGlyphs" fill="#ff00ff" stroke="#ff00ff" font-weight="bold" stroke-width="1.6">TABLE 14</text>
<defs><path id="arc763_652" d="M-106.22 80.04 A133 133 0 0 0 104.81 81.88"/></defs>
<text font-size="23" fill="#ff00ff" stroke="#ff00ff" font-weight="bold" stroke-width="2"><textPath href="#arc763_652" textLength="246" lengthAdjust="spacingAndGlyphs">ON T'APPORTE TON POKE</textPath></text>
<circle cx="0" cy="0" r="140.5" fill="none" stroke="#2f2fff" stroke-width="1.7"/>
</g>
<g transform="translate(1051.8,652)">
<path d="M-107 -44 L-104 -38 L-103 -30 L-101 -22 L-99 -12 L-93 -19 L-85 -21 L-80 -16 L-77 -10 L-72 -4 L-68 0 L-62 6 L-60 10 L-63 16 L-65 20 L-72 19 L-78 19 L-86 20 L-94 20 L-100 20 L-104 21 L-110 27 L-114 33 L-119 31 L-125 24 L-119 18 L-112 9 L-116 2 L-119 -6 L-121 -14 L-122 -21 L-119 -30 L-114 -37 Z" fill="#a9a9a9"/>
<path d="M-108 8 L-94 -8 L-90 -5 L-104 10 Z" fill="#e8e8e8" opacity="0.8"/>
<path d="M-81 -41 L-76 -35 L-72 -40 M-70 -36 L-66 -31 L-63 -35" fill="none" stroke="#a9a9a9" stroke-width="2.2"/>
<path d="M86 3 Q100 2 112 6 Q122 10 124 20 Q125 27 120 31 L114 34 L104 35 Q106 44 104 52 Q101 60 96 62 Q90 60 86 55 L69 45 Q72 40 80 37 L92 30 Q89 15 86 3 Z" fill="#ff00ff"/>
<path d="M102 43 L129 55 M114 34 L129 55" stroke="#ff00ff" stroke-width="2" fill="none"/>
<rect x="-47.6" y="-32" width="94" height="95" rx="5" fill="#ff00ff"/>
<path d="M4.9 26.0 h1 v1 h-1z M-0.9 -27.7 h1 v1 h-1z M20.9 15.3 h1 v1 h-1z M13.4 -22.3 h3 v1 h-1z M-20.8 -21.6 h2 v1 h-1z M-22.3 37.1 h1 v1 h-1z M20.1 55.9 h3 v1 h-1z M29.0 -21.4 h2 v1 h-1z M22.4 25.1 h1 v1 h-1z M-35.5 -15.3 h2 v1 h-1z M12.7 31.6 h1 v1 h-1z M-41.0 -22.8 h2 v1 h-1z M39.7 -19.4 h1 v1 h-1z M14.8 -3.0 h2 v1 h-1z M-3.0 12.1 h1 v1 h-1z M41.4 19.2 h2 v1 h-1z M40.2 52.5 h1 v1 h-1z M-17.7 -21.4 h3 v1 h-1z M41.5 5.3 h1 v1 h-1z M-35.7 -20.2 h2 v1 h-1z M38.0 -16.6 h2 v1 h-1z M32.5 32.5 h1 v1 h-1z M-0.2 47.3 h3 v1 h-1z M-39.9 -27.7 h3 v1 h-1z M15.3 6.9 h1 v1 h-1z M-7.0 4.3 h1 v1 h-1z M28.6 -27.9 h2 v1 h-1z M28.5 -17.7 h1 v1 h-1z M17.9 49.5 h2 v1 h-1z M-20.7 -22.4 h3 v1 h-1z M41.9 22.7 h2 v1 h-1z M35.7 37.0 h1 v1 h-1z M-18.4 -23.6 h2 v1 h-1z M11.3 -15.2 h2 v1 h-1z M-5.4 -0.9 h2 v1 h-1z M24.0 8.8 h1 v1 h-1z M26.2 26.3 h1 v1 h-1z M18.4 -23.7 h3 v1 h-1z M-4.1 36.7 h2 v1 h-1z M-1.2 50.4 h1 v1 h-1z M-27.7 7.7 h2 v1 h-1z M-17.0 35.6 h2 v1 h-1z M-7.9 -7.5 h3 v1 h-1z M4.8 5.9 h1 v1 h-1z M12.0 -21.5 h3 v1 h-1z M4.2 11.0 h2 v1 h-1z M41.7 10.7 h1 v1 h-1z M4.0 -7.0 h1 v1 h-1z M-13.3 -20.2 h1 v1 h-1z M-11.1 41.6 h1 v1 h-1z M32.5 36.5 h3 v1 h-1z M-9.8 36.1 h1 v1 h-1z M-10.3 1.1 h1 v1 h-1z M-0.2 21.4 h2 v1 h-1z M-31.4 15.3 h1 v1 h-1z M-34.2 49.1 h3 v1 h-1z M-8.4 10.3 h2 v1 h-1z M29.3 47.1 h1 v1 h-1z M-31.3 8.6 h3 v1 h-1z M39.3 14.1 h1 v1 h-1z M-9.1 51.7 h3 v1 h-1z M39.7 -6.6 h1 v1 h-1z M-23.2 -14.9 h1 v1 h-1z M37.1 34.1 h3 v1 h-1z M-34.9 38.8 h1 v1 h-1z M23.7 -8.0 h1 v1 h-1z M12.2 -1.9 h1 v1 h-1z M10.6 17.4 h3 v1 h-1z M16.7 -18.4 h1 v1 h-1z M-16.8 53.1 h1 v1 h-1z M-9.4 -8.8 h1 v1 h-1z M-41.1 -2.1 h3 v1 h-1z M-18.6 -0.8 h1 v1 h-1z M-2.1 -7.8 h1 v1 h-1z M-39.5 7.4 h2 v1 h-1z M-37.4 -11.3 h3 v1 h-1z M-35.2 -8.4 h3 v1 h-1z M35.7 -8.5 h1 v1 h-1z M16.4 33.8 h2 v1 h-1z M15.3 -11.0 h2 v1 h-1z M20.1 15.4 h1 v1 h-1z M-0.4 -10.8 h1 v1 h-1z M-22.6 -9.0 h2 v1 h-1z M-32.8 25.6 h1 v1 h-1z M33.3 13.7 h1 v1 h-1z M37.7 -15.4 h3 v1 h-1z M-37.4 -26.0 h1 v1 h-1z M-7.1 33.0 h1 v1 h-1z M-9.0 49.2 h2 v1 h-1z M19.5 57.8 h1 v1 h-1z M-14.3 -12.0 h3 v1 h-1z M-39.3 29.1 h3 v1 h-1z M28.5 56.7 h3 v1 h-1z M-27.8 -27.8 h2 v1 h-1z M-35.2 8.1 h1 v1 h-1z M5.1 37.3 h3 v1 h-1z M-12.0 42.7 h3 v1 h-1z M-34.6 32.7 h1 v1 h-1z M-10.7 51.1 h1 v1 h-1z M-14.8 35.4 h3 v1 h-1z M-39.5 7.3 h3 v1 h-1z M-38.6 -25.0 h1 v1 h-1z M25.5 -22.7 h1 v1 h-1z M20.8 49.3 h2 v1 h-1z M-11.5 0.8 h1 v1 h-1z M-20.0 33.6 h2 v1 h-1z M35.6 -2.4 h1 v1 h-1z M-40.0 -7.9 h3 v1 h-1z M18.1 12.1 h3 v1 h-1z M24.3 50.6 h3 v1 h-1z M-30.9 14.7 h1 v1 h-1z M25.4 35.5 h1 v1 h-1z M9.0 0.2 h2 v1 h-1z M-3.3 39.4 h1 v1 h-1z M1.0 5.7 h1 v1 h-1z M-21.2 -22.4 h1 v1 h-1z M-1.5 18.8 h1 v1 h-1z M40.3 48.0 h1 v1 h-1z M-19.7 -20.8 h1 v1 h-1z M-6.6 57.0 h3 v1 h-1z M-27.5 -16.6 h3 v1 h-1z M10.1 30.0 h1 v1 h-1z M23.5 -2.7 h2 v1 h-1z M5.6 4.1 h2 v1 h-1z M-25.3 -6.7 h1 v1 h-1z M-22.2 -3.8 h1 v1 h-1z M-14.6 6.1 h1 v1 h-1z M0.6 -8.1 h1 v1 h-1z M12.9 57.2 h1 v1 h-1z M-41.6 47.9 h1 v1 h-1z M28.6 50.6 h1 v1 h-1z M31.7 -8.0 h1 v1 h-1z M-26.1 55.7 h1 v1 h-1z M36.1 4.0 h1 v1 h-1z M-4.3 -5.6 h1 v1 h-1z M-33.1 23.3 h2 v1 h-1z M-23.7 3.7 h1 v1 h-1z M-38.3 58.0 h1 v1 h-1z M8.4 28.0 h1 v1 h-1z M26.4 42.4 h3 v1 h-1z M15.0 -12.1 h2 v1 h-1z M-35.5 -25.3 h3 v1 h-1z M4.0 -22.6 h1 v1 h-1z M24.9 29.1 h1 v1 h-1z M11.7 -20.2 h1 v1 h-1z M-8.6 -4.7 h2 v1 h-1z M14.1 7.9 h1 v1 h-1z M-15.8 20.7 h2 v1 h-1z M-7.2 -26.4 h2 v1 h-1z M12.1 5.6 h3 v1 h-1z M-24.9 -27.5 h1 v1 h-1z M-6.4 42.6 h3 v1 h-1z M6.5 3.4 h1 v1 h-1z M-31.1 -23.6 h1 v1 h-1z M11.8 50.2 h1 v1 h-1z M6.1 51.7 h1 v1 h-1z M-29.7 -3.6 h1 v1 h-1z M35.7 -18.6 h3 v1 h-1z M21.3 40.1 h1 v1 h-1z M-16.7 44.0 h1 v1 h-1z" fill="#ffffff" opacity="0.85"/>
<path d="M-43 -27 H42 M-43 -27 V57" stroke="#ffb0ff" stroke-width="0.8" fill="none"/>
<text x="0" y="-117" font-size="22" text-anchor="middle" textLength="44" lengthAdjust="spacingAndGlyphs" fill="#ff00ff" stroke="#ff00ff" font-weight="bold" stroke-width="2.2">heiko</text>
<text x="-47" y="-86" font-size="23" textLength="89.4" lengthAdjust="spacingAndGlyphs" fill="#ff00ff" stroke="#ff00ff" font-weight="bold" stroke-width="2.4">SCANNE</text>
<circle cx="-55.5" cy="-94.5" r="8" fill="none" stroke="#ff00ff" stroke-width="2.2"/>
<text x="-55.5" y="-89.5" font-size="13" text-anchor="middle" font-weight="bold" fill="#ff00ff">1</text>
<text x="-61" y="-65" font-size="23" textLength="120.4" lengthAdjust="spacingAndGlyphs" fill="#ff00ff" stroke="#ff00ff" font-weight="bold" stroke-width="2.4">COMMANDE</text>
<circle cx="-70" cy="-73.5" r="8" fill="none" stroke="#ff00ff" stroke-width="2.2"/>
<text x="-70" y="-68.5" font-size="13" text-anchor="middle" font-weight="bold" fill="#ff00ff">2</text>
<text x="-30" y="-45" font-size="23" textLength="60.4" lengthAdjust="spacingAndGlyphs" fill="#ff00ff" stroke="#ff00ff" font-weight="bold" stroke-width="2.4">CHILL</text>
<circle cx="-39" cy="-53.5" r="8" fill="none" stroke="#ff00ff" stroke-width="2.2"/>
<text x="-39" y="-48.5" font-size="13" text-anchor="middle" font-weight="bold" fill="#ff00ff">3</text>
<text x="0" y="79.5" font-size="15" text-anchor="middle" textLength="60" lengthAdjust="spacingAndGlyphs" fill="#ff00ff" stroke="#ff00ff" font-weight="bold" stroke-width="1.6">TABLE 14</text>
<defs><path id="arc1051_652" d="M-106.22 80.04 A133 133 0 0 0 104.81 81.88"/></defs>
<text font-size="23" fill="#ff00ff" stroke="#ff00ff" font-weight="bold" stroke-width="2"><textPath href="#arc1051_652" textLength="246" lengthAdjust="spacingAndGlyphs">ON T'APPORTE TON POKE</textPath></text>
<circle cx="0" cy="0" r="140.5" fill="none" stroke="#2f2fff" stroke-width="1.7"/>
</g>
<g transform="translate(763.8,940.5)">
<path d="M-107 -44 L-104 -38 L-103 -30 L-101 -22 L-99 -12 L-93 -19 L-85 -21 L-80 -16 L-77 -10 L-72 -4 L-68 0 L-62 6 L-60 10 L-63 16 L-65 20 L-72 19 L-78 19 L-86 20 L-94 20 L-100 20 L-104 21 L-110 27 L-114 33 L-119 31 L-125 24 L-119 18 L-112 9 L-116 2 L-119 -6 L-121 -14 L-122 -21 L-119 -30 L-114 -37 Z" fill="#a9a9a9"/>
<path d="M-108 8 L-94 -8 L-90 -5 L-104 10 Z" fill="#e8e8e8" opacity="0.8"/>
<path d="M-81 -41 L-76 -35 L-72 -40 M-70 -36 L-66 -31 L-63 -35" fill="none" stroke="#a9a9a9" stroke-width="2.2"/>
<path d="M86 3 Q100 2 112 6 Q122 10 124 20 Q125 27 120 31 L114 34 L104 35 Q106 44 104 52 Q101 60 96 62 Q90 60 86 55 L69 45 Q72 40 80 37 L92 30 Q89 15 86 3 Z" fill="#ff00ff"/>
<path d="M102 43 L129 55 M114 34 L129 55" stroke="#ff00ff" stroke-width="2" fill="none"/>
<rect x="-47.6" y="-32" width="94" height="95" rx="5" fill="#ff00ff"/>
<path d="M39.9 13.5 h1 v1 h-1z M9.0 26.7 h1 v1 h-1z M34.0 25.3 h1 v1 h-1z M11.8 45.7 h3 v1 h-1z M9.6 -11.1 h3 v1 h-1z M-26.6 -9.2 h3 v1 h-1z M36.8 -14.5 h2 v1 h-1z M-31.7 -6.8 h1 v1 h-1z M-38.5 20.4 h1 v1 h-1z M14.1 -0.1 h3 v1 h-1z M8.4 19.3 h2 v1 h-1z M12.5 -1.5 h1 v1 h-1z M-6.2 28.7 h3 v1 h-1z M0.3 -12.6 h1 v1 h-1z M10.0 14.1 h1 v1 h-1z M-4.5 25.2 h3 v1 h-1z M28.3 41.7 h3 v1 h-1z M-33.0 -17.0 h3 v1 h-1z M-11.3 41.0 h1 v1 h-1z M-38.6 -16.8 h2 v1 h-1z M23.3 16.0 h1 v1 h-1z M21.2 49.0 h1 v1 h-1z M-39.8 -22.3 h1 v1 h-1z M-25.7 56.4 h3 v1 h-1z M-17.8 41.7 h1 v1 h-1z M15.6 34.0 h1 v1 h-1z M-36.5 2.2 h2 v1 h-1z M-28.7 49.1 h2 v1 h-1z M34.0 11.3 h2 v1 h-1z M0.2 51.1 h1 v1 h-1z M7.7 25.0 h1 v1 h-1z M-15.2 -24.8 h1 v1 h-1z M-8.1 26.7 h2 v1 h-1z M15.1 49.0 h1 v1 h-1z M24.5 -5.3 h1 v1 h-1z M11.5 2.9 h3 v1 h-1z M4.6 21.9 h1 v1 h-1z M-20.8 18.1 h3 v1 h-1z M20.0 3.9 h3 v1 h-1z M41.2 21.7 h2 v1 h-1z M-14.2 -21.0 h1 v1 h-1z M-27.2 35.9 h1 v1 h-1z M-17.1 16.4 h2 v1 h-1z M11.7 56.6 h2 v1 h-1z M19.6 36.3 h1 v1 h-1z M-29.5 25.0 h3 v1 h-1z M-6.9 3.3 h1 v1 h-1z M-30.9 -8.5 h1 v1 h-1z M-40.1 -27.8 h2 v1 h-1z M-16.5 17.0 h1 v1 h-1z M-7.3 -2.1 h1 v1 h-1z M-24.8 25.7 h3 v1 h-1z M-28.7 -26.8 h1 v1 h-1z M17.4 10.8 h1 v1 h-1z M11.6 46.9 h2 v1 h-1z M-8.2 -5.3 h1 v1 h-1z M-37.3 42.6 h2 v1 h-1z M8.0 21.7 h3 v1 h-1z M-21.1 49.7 h1 v1 h-1z M-36.8 -25.8 h1 v1 h-1z M-22.0 -23.0 h1 v1 h-1z M-41.0 19.4 h1 v1 h-1z M-30.0 -10.8 h3 v1 h-1z M26.3 -13.0 h2 v1 h-1z M-36.6 25.8 h3 v1 h-1z M18.1 -27.5 h3 v1 h-1z M20.6 12.0 h3 v1 h-1z M-27.3 57.7 h2 v1 h-1z M-22.5 -24.7 h2 v1 h-1z M32.9 51.6 h2 v1 h-1z M17.8 -5.1 h3 v1 h-1z M15.6 50.9 h2 v1 h-1z M-17.2 51.9 h1 v1 h-1z M-34.8 15.6 h1 v1 h-1z M-20.1 -7.7 h1 v1 h-1z M37.4 36.2 h2 v1 h-1z M-25.9 5.4 h1 v1 h-1z M-10.1 45.3 h3 v1 h-1z M-2.3 17.6 h1 v1 h-1z M30.0 9.6 h1 v1 h-1z M5.9 -1.5 h1 v1 h-1z M-9.1 22.3 h1 v1 h-1z M-29.9 -25.7 h1 v1 h-1z M10.2 -14.1 h1 v1 h-1z M16.9 -25.3 h1 v1 h-1z M16.2 26.5 h1 v1 h-1z M19.9 -22.3 h2 v1 h-1z M-25.3 54.1 h1 v1 h-1z M31.9 37.0 h3 v1 h-1z M-33.0 -10.3 h1 v1 h-1z M-39.2 53.6 h1 v1 h-1z M27.3 26.3 h2 v1 h-1z M-1.9 -16.6 h1 v1 h-1z M-17.3 0.9 h2 v1 h-1z M-40.2 -5.9 h2 v1 h-1z M-37.9 37.3 h2 v1 h-1z M22.6 23.8 h3 v1 h-1z M29.5 25.2 h1 v1 h-1z M24.3 -25.3 h1 v1 h-1z M-12.9 32.6 h1 v1 h-1z M18.0 43.2 h2 v1 h-1z M-27.7 -27.9 h1 v1 h-1z M-17.8 36.5 h1 v1 h-1z M-41.6 14.2 h3 v1 h-1z M16.4 43.0 h3 v1 h-1z M7.8 54.3 h2 v1 h-1z M6.6 -14.3 h1 v1 h-1z M36.8 -8.1 h1 v1 h-1z M-32.8 26.7 h1 v1 h-1z M-0.8 57.2 h1 v1 h-1z M10.7 2.6 h3 v1 h-1z M36.0 48.7 h1 v1 h-1z M-6.5 27.5 h2 v1 h-1z M-24.7 -5.4 h1 v1 h-1z M-10.1 48.0 h1 v1 h-1z M37.3 -17.1 h1 v1 h-1z M-12.7 0.1 h1 v1 h-1z M30.9 10.7 h2 v1 h-1z M-27.8 9.7 h2 v1 h-1z M6.7 -17.2 h3 v1 h-1z M12.0 31.9 h1 v1 h-1z M-19.5 36.9 h1 v1 h-1z M18.8 55.8 h2 v1 h-1z M8.6 2.0 h1 v1 h-1z M-14.4 -11.7 h1 v1 h-1z M-28.2 28.6 h1 v1 h-1z M-9.7 56.6 h2 v1 h-1z M19.6 9.4 h1 v1 h-1z M-32.8 50.4 h2 v1 h-1z M-24.7 5.4 h1 v1 h-1z M-40.9 45.5 h3 v1 h-1z M16.2 15.0 h2 v1 h-1z M-3.1 -15.8 h3 v1 h-1z M-41.5 -7.2 h3 v1 h-1z M16.9 22.5 h3 v1 h-1z M29.1 29.4 h1 v1 h-1z M15.1 27.2 h3 v1 h-1z M-5.7 -5.7 h1 v1 h-1z M33.2 -7.2 h3 v1 h-1z M17.9 26.1 h2 v1 h-1z M29.4 13.5 h1 v1 h-1z M10.2 7.2 h1 v1 h-1z M33.1 0.2 h1 v1 h-1z M-9.3 14.1 h1 v1 h-1z M-38.8 18.7 h1 v1 h-1z M18.2 53.8 h1 v1 h-1z M1.6 -19.3 h3 v1 h-1z M3.4 33.7 h1 v1 h-1z M11.7 43.3 h2 v1 h-1z M-7.5 53.5 h1 v1 h-1z M41.2 -12.2 h1 v1 h-1z M19.2 24.8 h1 v1 h-1z M-20.8 4.8 h1 v1 h-1z M-40.9 8.0 h3 v1 h-1z M10.8 30.0 h2 v1 h-1z M-32.8 -1.9 h3 v1 h-1z M37.0 17.3 h1 v1 h-1z M41.5 54.6 h3 v1 h-1z M-24.2 -16.9 h1 v1 h-1z M26.0 26.5 h3 v1 h-1z" fill="#ffffff" opacity="0.85"/>
<path d="M-43 -27 H42 M-43 -27 V57" stroke="#ffb0ff" stroke-width="0.8" fill="none"/>
<text x="0" y="-117" font-size="22" text-anchor="middle" textLength="44" lengthAdjust="spacingAndGlyphs" fill="#ff00ff" stroke="#ff00ff" font-weight="bold" stroke-width="2.2">heiko</text>
<text x="-47" y="-86" font-size="23" textLength="89.4" lengthAdjust="spacingAndGlyphs" fill="#ff00ff" stroke="#ff00ff" font-weight="bold" stroke-width="2.4">SCANNE</text>
<circle cx="-55.5" cy="-94.5" r="8" fill="none" stroke="#ff00ff" stroke-width="2.2"/>
<text x="-55.5" y="-89.5" font-size="13" text-anchor="middle" font-weight="bold" fill="#ff00ff">1</text>
<text x="-61" y="-65" font-size="23" textLength="120.4" lengthAdjust="spacingAndGlyphs" fill="#ff00ff" stroke="#ff00ff" font-weight="bold" stroke-width="2.4">COMMANDE</text>
<circle cx="-70" cy="-73.5" r="8" fill="none" stroke="#ff00ff" stroke-width="2.2"/>
<text x="-70" y="-68.5" font-size="13" text-anchor="middle" font-weight="bold" fill="#ff00ff">2</text>
<text x="-30" y="-45" font-size="23" textLength="60.4" lengthAdjust="spacingAndGlyphs" fill="#ff00ff" stroke="#ff00ff" font-weight="bold" stroke-width="2.4">CHILL</text>
<circle cx="-39" cy="-53.5" r="8" fill="none" stroke="#ff00ff" stroke-width="2.2"/>
<text x="-39" y="-48.5" font-size="13" text-anchor="middle" font-weight="bold" fill="#ff00ff">3</text>
<text x="0" y="79.5" font-size="15" text-anchor="middle" textLength="60" lengthAdjust="spacingAndGlyphs" fill="#ff00ff" stroke="#ff00ff" font-weight="bold" stroke-width="1.6">TABLE 14</text>
<defs><path id="arc763_940" d="M-106.22 80.04 A133 133 0 0 0 104.81 81.88"/></defs>
<text font-size="23" fill="#ff00ff" stroke="#ff00ff" font-weight="bold" stroke-width="2"><textPath href="#arc763_940" textLength="246" lengthAdjust="spacingAndGlyphs">ON T'APPORTE TON POKE</textPath></text>
<circle cx="0" cy="0" r="140.5" fill="none" stroke="#2f2fff" stroke-width="1.7"/>
</g>
<g transform="translate(1051.8,940.5)">
<path d="M-107 -44 L-104 -38 L-103 -30 L-101 -22 L-99 -12 L-93 -19 L-85 -21 L-80 -16 L-77 -10 L-72 -4 L-68 0 L-62 6 L-60 10 L-63 16 L-65 20 L-72 19 L-78 19 L-86 20 L-94 20 L-100 20 L-104 21 L-110 27 L-114 33 L-119 31 L-125 24 L-119 18 L-112 9 L-116 2 L-119 -6 L-121 -14 L-122 -21 L-119 -30 L-114 -37 Z" fill="#a9a9a9"/>
<path d="M-108 8 L-94 -8 L-90 -5 L-104 10 Z" fill="#e8e8e8" opacity="0.8"/>
<path d="M-81 -41 L-76 -35 L-72 -40 M-70 -36 L-66 -31 L-63 -35" fill="none" stroke="#a9a9a9" stroke-width="2.2"/>
<path d="M86 3 Q100 2 112 6 Q122 10 124 20 Q125 27 120 31 L114 34 L104 35 Q106 44 104 52 Q101 60 96 62 Q90 60 86 55 L69 45 Q72 40 80 37 L92 30 Q89 15 86 3 Z" fill="#ff00ff"/>
<path d="M102 43 L129 55 M114 34 L129 55" stroke="#ff00ff" stroke-width="2" fill="none"/>
<rect x="-47.6" y="-32" width="94" height="95" rx="5" fill="#ff00ff"/>
<path d="M11.9 34.0 h1 v1 h-1z M-12.3 26.9 h3 v1 h-1z M-2.7 -2.7 h1 v1 h-1z M23.5 12.4 h1 v1 h-1z M-19.5 4.3 h2 v1 h-1z M40.6 30.4 h3 v1 h-1z M-41.8 34.1 h2 v1 h-1z M-11.9 28.3 h2 v1 h-1z M-1.7 8.9 h1 v1 h-1z M13.4 3.2 h2 v1 h-1z M29.8 -23.1 h2 v1 h-1z M23.9 -15.9 h2 v1 h-1z M11.2 -26.7 h1 v1 h-1z M-24.4 -21.8 h2 v1 h-1z M-21.0 -19.3 h1 v1 h-1z M29.8 -12.0 h3 v1 h-1z M-12.9 -14.9 h3 v1 h-1z M24.5 -13.6 h1 v1 h-1z M14.2 48.9 h2 v1 h-1z M-25.4 31.6 h1 v1 h-1z M20.3 9.7 h1 v1 h-1z M4.6 -5.3 h1 v1 h-1z M27.5 12.7 h1 v1 h-1z M-1.3 49.9 h3 v1 h-1z M-21.3 -13.8 h1 v1 h-1z M-28.5 -0.4 h3 v1 h-1z M13.9 44.3 h2 v1 h-1z M-6.2 58.0 h1 v1 h-1z M-26.8 3.0 h1 v1 h-1z M-40.3 -24.1 h2 v1 h-1z M25.9 -19.9 h3 v1 h-1z M-1.3 49.2 h1 v1 h-1z M-24.1 7.7 h1 v1 h-1z M-13.6 46.1 h2 v1 h-1z M-13.3 39.0 h1 v1 h-1z M-18.1 1.4 h2 v1 h-1z M4.5 43.1 h2 v1 h-1z M-12.2 14.5 h2 v1 h-1z M0.3 -4.6 h2 v1 h-1z M39.9 28.3 h1 v1 h-1z M-14.2 -0.7 h2 v1 h-1z M-31.3 55.7 h1 v1 h-1z M23.9 -24.6 h3 v1 h-1z M3.8 -23.7 h2 v1 h-1z M-32.9 -24.0 h3 v1 h-1z M9.1 28.6 h3 v1 h-1z M9.8 25.9 h1 v1 h-1z M-24.1 29.4 h3 v1 h-1z M10.5 -13.0 h1 v1 h-1z M31.0 8.3 h1 v1 h-1z M34.8 28.4 h2 v1 h-1z M31.2 -16.1 h2 v1 h-1z M5.2 -5.8 h2 v1 h-1z M-26.5 -25.1 h1 v1 h-1z M-5.8 27.2 h1 v1 h-1z M-0.2 16.9 h1 v1 h-1z M23.0 8.2 h3 v1 h-1z M-4.5 -26.8 h3 v1 h-1z M7.9 57.4 h1 v1 h-1z M-2.1 7.5 h1 v1 h-1z M-35.0 12.6 h1 v1 h-1z M10.7 8.7 h1 v1 h-1z M15.4 -17.5 h1 v1 h-1z M-23.7 -17.6 h3 v1 h-1z M-40.5 33.9 h1 v1 h-1z M-4.1 36.0 h1 v1 h-1z M-11.3 36.3 h1 v1 h-1z M19.3 -20.8 h3 v1 h-1z M-3.3 52.2 h2 v1 h-1z M34.7 -23.5 h1 v1 h-1z M-41.0 -26.7 h1 v1 h-1z M-9.3 -1.1 h1 v1 h-1z M38.4 43.8 h1 v1 h-1z M-15.4 53.6 h3 v1 h-1z M-2.5 -13.7 h1 v1 h-1z M-11.5 27.5 h3 v1 h-1z M-1.9 38.9 h3 v1 h-1z M37.4 39.5 h2 v1 h-1z M-17.4 -22.8 h2 v1 h-1z M31.0 34.4 h1 v1 h-1z M27.8 23.7 h2 v1 h-1z M7.1 56.0 h1 v1 h-1z M-10.4 30.9 h1 v1 h-1z M25.8 -3.6 h1 v1 h-1z M-15.0 -5.0 h1 v1 h-1z M7.3 42.2 h1 v1 h-1z M-17.8 -15.9 h1 v1 h-1z M-19.0 45.2 h3 v1 h-1z M-12.9 -20.7 h3 v1 h-1z M25.0 -10.8 h1 v1 h-1z M-16.0 -23.0 h3 v1 h-1z M-2.9 -10.2 h2 v1 h-1z M7.3 -27.2 h3 v1 h-1z M-3.4 -20.5 h2 v1 h-1z M22.9 -8.0 h2 v1 h-1z M32.3 16.9 h3 v1 h-1z M0.5 -10.6 h1 v1 h-1z M-25.8 -12.5 h2 v1 h-1z M-11.5 20.5 h3 v1 h-1z M23.5 45.7 h1 v1 h-1z M-38.3 57.8 h2 v1 h-1z M30.8 4.0 h3 v1 h-1z M24.1 -14.6 h1 v1 h-1z M-13.0 16.7 h1 v1 h-1z M-34.1 -10.4 h3 v1 h-1z M7.3 -9.6 h2 v1 h-1z M-6.2 53.4 h1 v1 h-1z M-20.7 -24.7 h1 v1 h-1z M41.5 4.5 h1 v1 h-1z M-37.7 19.9 h3 v1 h-1z M-1.1 44.7 h1 v1 h-1z M30.5 27.0 h1 v1 h-1z M17.3 -20.3 h2 v1 h-1z M5.4 27.1 h3 v1 h-1z M-26.7 45.1 h2 v1 h-1z M39.1 57.3 h1 v1 h-1z M-27.5 53.0 h2 v1 h-1z M-37.0 19.5 h1 v1 h-1z M28.3 -24.0 h3 v1 h-1z M-37.3 -15.5 h1 v1 h-1z M36.9 30.2 h2 v1 h-1z M7.5 10.0 h1 v1 h-1z M-2.5 4.0 h3 v1 h-1z M-31.6 13.4 h1 v1 h-1z M-4.9 41.4 h1 v1 h-1z M-2.7 50.5 h1 v1 h-1z M-28.8 43.6 h1 v1 h-1z M36.5 46.5 h1 v1 h-1z M23.4 54.4 h3 v1 h-1z M28.7 26.0 h3 v1 h-1z M39.7 -0.3 h1 v1 h-1z M-1.9 26.0 h1 v1 h-1z M-14.1 35.3 h1 v1 h-1z M18.0 19.6 h1 v1 h-1z M-5.1 -15.2 h3 v1 h-1z M-7.4 -14.6 h2 v1 h-1z M6.0 -2.5 h1 v1 h-1z M-20.1 -18.6 h3 v1 h-1z M33.9 -18.2 h1 v1 h-1z M11.0 39.7 h1 v1 h-1z M5.0 43.8 h1 v1 h-1z M-20.3 -10.7 h2 v1 h-1z M-5.7 -5.5 h1 v1 h-1z M35.7 -19.6 h2 v1 h-1z M-7.1 -14.1 h2 v1 h-1z M-29.9 27.0 h3 v1 h-1z M25.8 1.3 h1 v1 h-1z M-4.8 39.9 h2 v1 h-1z M-26.4 9.4 h3 v1 h-1z M-23.7 21.1 h1 v1 h-1z M28.8 16.9 h1 v1 h-1z M17.8 -11.1 h1 v1 h-1z M27.6 48.5 h3 v1 h-1z M21.9 -12.9 h1 v1 h-1z M9.4 32.9 h1 v1 h-1z M7.0 -10.6 h1 v1 h-1z M16.1 16.7 h1 v1 h-1z M1.6 1.9 h2 v1 h-1z M28.7 46.3 h3 v1 h-1z M-34.4 7.2 h3 v1 h-1z" fill="#ffffff" opacity="0.85"/>
<path d="M-43 -27 H42 M-43 -27 V57" stroke="#ffb0ff" stroke-width="0.8" fill="none"/>
<text x="0" y="-117" font-size="22" text-anchor="middle" textLength="44" lengthAdjust="spacingAndGlyphs" fill="#ff00ff" stroke="#ff00ff" font-weight="bold" stroke-width="2.2">heiko</text>
<text x="-47" y="-86" font-size="23" textLength="89.4" lengthAdjust="spacingAndGlyphs" fill="#ff00ff" stroke="#ff00ff" font-weight="bold" stroke-width="2.4">SCANNE</text>
<circle cx="-55.5" cy="-94.5" r="8" fill="none" stroke="#ff00ff" stroke-width="2.2"/>
<text x="-55.5" y="-89.5" font-size="13" text-anchor="middle" font-weight="bold" fill="#ff00ff">1</text>
<text x="-61" y="-65" font-size="23" textLength="120.4" lengthAdjust="spacingAndGlyphs" fill="#ff00ff" stroke="#ff00ff" font-weight="bold" stroke-width="2.4">COMMANDE</text>
<circle cx="-70" cy="-73.5" r="8" fill="none" stroke="#ff00ff" stroke-width="2.2"/>
<text x="-70" y="-68.5" font-size="13" text-anchor="middle" font-weight="bold" fill="#ff00ff">2</text>
<text x="-30" y="-45" font-size="23" textLength="60.4" lengthAdjust="spacingAndGlyphs" fill="#ff00ff" stroke="#ff00ff" font-weight="bold" stroke-width="2.4">CHILL</text>
<circle cx="-39" cy="-53.5" r="8" fill="none" stroke="#ff00ff" stroke-width="2.2"/>
<text x="-39" y="-48.5" font-size="13" text-anchor="middle" font-weight="bold" fill="#ff00ff">3</text>
<text x="0" y="79.5" font-size="15" text-anchor="middle" textLength="60" lengthAdjust="spacingAndGlyphs" fill="#ff00ff" stroke="#ff00ff" font-weight="bold" stroke-width="1.6">TABLE 14</text>
<defs><path id="arc1051_940" d="M-106.22 80.04 A133 133 0 0 0 104.81 81.88"/></defs>
<text font-size="23" fill="#ff00ff" stroke="#ff00ff" font-weight="bold" stroke-width="2"><textPath href="#arc1051_940" textLength="246" lengthAdjust="spacingAndGlyphs">ON T'APPORTE TON POKE</textPath></text>
<circle cx="0" cy="0" r="140.5" fill="none" stroke="#2f2fff" stroke-width="1.7"/>
</g>
<text x="150.2" y="275.9" font-size="16.5" fill="#868686" text-anchor="middle" textLength="23.5" lengthAdjust="spacingAndGlyphs" >-96</text>
<text x="150.2" y="1403.9" font-size="16.5" fill="#868686" text-anchor="middle" textLength="23.5" lengthAdjust="spacingAndGlyphs" >-96</text>
<text x="288.0" y="275.9" font-size="16.5" fill="#868686" text-anchor="middle" textLength="23.5" lengthAdjust="spacingAndGlyphs" >-64</text>
<text x="288.0" y="1403.9" font-size="16.5" fill="#868686" text-anchor="middle" textLength="23.5" lengthAdjust="spacingAndGlyphs" >-64</text>
<text x="425.8" y="275.9" font-size="16.5" fill="#868686" text-anchor="middle" textLength="23.5" lengthAdjust="spacingAndGlyphs" >-32</text>
<text x="425.8" y="1403.9" font-size="16.5" fill="#868686" text-anchor="middle" textLength="23.5" lengthAdjust="spacingAndGlyphs" >-32</text>
<text x="563.6" y="275.9" font-size="16.5" fill="#868686" text-anchor="middle" textLength="8.5" lengthAdjust="spacingAndGlyphs" >0</text>
<text x="563.6" y="1403.9" font-size="16.5" fill="#868686" text-anchor="middle" textLength="8.5" lengthAdjust="spacingAndGlyphs" >0</text>
<text x="701.4" y="275.9" font-size="16.5" fill="#868686" text-anchor="middle" textLength="17.0" lengthAdjust="spacingAndGlyphs" >32</text>
<text x="701.4" y="1403.9" font-size="16.5" fill="#868686" text-anchor="middle" textLength="17.0" lengthAdjust="spacingAndGlyphs" >32</text>
<text x="839.2" y="275.9" font-size="16.5" fill="#868686" text-anchor="middle" textLength="17.0" lengthAdjust="spacingAndGlyphs" >64</text>
<text x="839.2" y="1403.9" font-size="16.5" fill="#868686" text-anchor="middle" textLength="17.0" lengthAdjust="spacingAndGlyphs" >64</text>
<text x="977.0" y="275.9" font-size="16.5" fill="#868686" text-anchor="middle" textLength="17.0" lengthAdjust="spacingAndGlyphs" >96</text>
<text x="977.0" y="1403.9" font-size="16.5" fill="#868686" text-anchor="middle" textLength="17.0" lengthAdjust="spacingAndGlyphs" >96</text>
<text x="1114.8" y="275.9" font-size="16.5" fill="#868686" text-anchor="middle" textLength="25.5" lengthAdjust="spacingAndGlyphs" >128</text>
<text x="1114.8" y="1403.9" font-size="16.5" fill="#868686" text-anchor="middle" textLength="25.5" lengthAdjust="spacingAndGlyphs" >128</text>
<text x="1252.6" y="275.9" font-size="16.5" fill="#868686" text-anchor="middle" textLength="25.5" lengthAdjust="spacingAndGlyphs" >160</text>
<text x="1252.6" y="1403.9" font-size="16.5" fill="#868686" text-anchor="middle" textLength="25.5" lengthAdjust="spacingAndGlyphs" >160</text>
<text x="1390.4" y="275.9" font-size="16.5" fill="#868686" text-anchor="middle" textLength="25.5" lengthAdjust="spacingAndGlyphs" >192</text>
<text x="1390.4" y="1403.9" font-size="16.5" fill="#868686" text-anchor="middle" textLength="25.5" lengthAdjust="spacingAndGlyphs" >192</text>
<text x="1528.2" y="275.9" font-size="16.5" fill="#868686" text-anchor="middle" textLength="25.5" lengthAdjust="spacingAndGlyphs" >224</text>
<text x="1528.2" y="1403.9" font-size="16.5" fill="#868686" text-anchor="middle" textLength="25.5" lengthAdjust="spacingAndGlyphs" >224</text>
<text x="130.5" y="319.9" font-size="16.5" fill="#868686" textLength="25.5" lengthAdjust="spacingAndGlyphs" >192</text>
<text x="1602" y="319.9" font-size="16.5" fill="#868686" text-anchor="end" textLength="25.5" lengthAdjust="spacingAndGlyphs" >192</text>
<text x="130.5" y="457.6" font-size="16.5" fill="#868686" textLength="25.5" lengthAdjust="spacingAndGlyphs" >160</text>
<text x="1602" y="457.6" font-size="16.5" fill="#868686" text-anchor="end" textLength="25.5" lengthAdjust="spacingAndGlyphs" >160</text>
<text x="130.5" y="595.3" font-size="16.5" fill="#868686" textLength="25.5" lengthAdjust="spacingAndGlyphs" >128</text>
<text x="1602" y="595.3" font-size="16.5" fill="#868686" text-anchor="end" textLength="25.5" lengthAdjust="spacingAndGlyphs" >128</text>
<text x="130.5" y="733.0" font-size="16.5" fill="#868686" textLength="17.0" lengthAdjust="spacingAndGlyphs" >96</text>
<text x="1602" y="733.0" font-size="16.5" fill="#868686" text-anchor="end" textLength="17.0" lengthAdjust="spacingAndGlyphs" >96</text>
<text x="130.5" y="870.7" font-size="16.5" fill="#868686" textLength="17.0" lengthAdjust="spacingAndGlyphs" >64</text>
<text x="1602" y="870.7" font-size="16.5" fill="#868686" text-anchor="end" textLength="17.0" lengthAdjust="spacingAndGlyphs" >64</text>
<text x="130.5" y="1008.4" font-size="16.5" fill="#868686" textLength="17.0" lengthAdjust="spacingAndGlyphs" >32</text>
<text x="1602" y="1008.4" font-size="16.5" fill="#868686" text-anchor="end" textLength="17.0" lengthAdjust="spacingAndGlyphs" >32</text>
<text x="130.5" y="1146.1" font-size="16.5" fill="#868686" textLength="8.5" lengthAdjust="spacingAndGlyphs" >0</text>
<text x="1602" y="1146.1" font-size="16.5" fill="#868686" text-anchor="end" textLength="8.5" lengthAdjust="spacingAndGlyphs" >0</text>
<text x="130.5" y="1283.8" font-size="16.5" fill="#868686" textLength="23.5" lengthAdjust="spacingAndGlyphs" >-32</text>
<text x="1602" y="1283.8" font-size="16.5" fill="#868686" text-anchor="end" textLength="23.5" lengthAdjust="spacingAndGlyphs" >-32</text>
<text x="130.5" y="1421.5" font-size="16.5" fill="#868686" textLength="23.5" lengthAdjust="spacingAndGlyphs" >-64</text>
<text x="1602" y="1421.5" font-size="16.5" fill="#868686" text-anchor="end" textLength="23.5" lengthAdjust="spacingAndGlyphs" >-64</text>
<text x="621" y="1159" font-size="16" fill="#8a7a6a" text-anchor="middle" >X</text>
<text x="554.5" y="1088.5" font-size="16" fill="#8a7a6a" text-anchor="middle" >Y</text>
</g>
<defs><linearGradient id="hdr1" x1="0" y1="0" x2="1" y2="0"><stop offset="0" stop-color="#000000"/><stop offset="0.12" stop-color="#1a0606"/><stop offset="0.3" stop-color="#5a1a1a"/><stop offset="0.47" stop-color="#9a2a2a"/><stop offset="0.61" stop-color="#c23535"/><stop offset="0.82" stop-color="#d2572f"/><stop offset="1" stop-color="#df7a30"/></linearGradient></defs>
<rect x="1624" y="244" width="935" height="34" fill="url(#hdr1)" />
<text x="1636.2" y="268" font-size="16" fill="#ffffff" textLength="113.6" lengthAdjust="spacingAndGlyphs" >Coupes/Calques</text>
<rect x="2510.6" y="250" width="18.5" height="19" fill="none" rx="2" stroke="#a26a48" stroke-width="1.2" stroke-dasharray="2 1.5"/>
<rect x="2536.6" y="250" width="18.5" height="19" fill="none" rx="2" stroke="#a26a48" stroke-width="1.2" stroke-dasharray="2 1.5"/>
<path d="M2514 263 V256 H2521 M2518 259 H2525 V266 H2518 Z" fill="none" stroke="#a26a48" stroke-width="1.2" />
<path d="M2540 253.5 L2552 266 M2552 253.5 L2540 266" fill="none" stroke="#a26a48" stroke-width="1.6" />
<rect x="1627" y="280" width="875" height="326" fill="#2d2d2d" />
<rect x="1627" y="280" width="875" height="24" fill="#474747" />
<rect x="1627" y="304" width="875" height="2" fill="#1f1f1f" />
<rect x="1784.5" y="281" width="1" height="22" fill="#353535" />
<rect x="1785.5" y="281" width="1" height="22" fill="#575757" />
<rect x="1856.5" y="281" width="1" height="22" fill="#353535" />
<rect x="1857.5" y="281" width="1" height="22" fill="#575757" />
<rect x="2048.5" y="281" width="1" height="22" fill="#353535" />
<rect x="2049.5" y="281" width="1" height="22" fill="#575757" />
<rect x="2131.5" y="281" width="1" height="22" fill="#353535" />
<rect x="2132.5" y="281" width="1" height="22" fill="#575757" />
<rect x="2207.5" y="281" width="1" height="22" fill="#353535" />
<rect x="2208.5" y="281" width="1" height="22" fill="#575757" />
<text x="1635" y="299.3" font-size="16" fill="#f4f4f4" textLength="8.5" lengthAdjust="spacingAndGlyphs" >#</text>
<text x="1790" y="299.3" font-size="16" fill="#f4f4f4" textLength="48.2" lengthAdjust="spacingAndGlyphs" >Calque</text>
<text x="1862.4" y="299.3" font-size="16" fill="#f4f4f4" textLength="40.2" lengthAdjust="spacingAndGlyphs" >Mode</text>
<text x="2054.2" y="299.3" font-size="16" fill="#f4f4f4" textLength="59.8" lengthAdjust="spacingAndGlyphs" >Vit/Puiss</text>
<text x="2136.4" y="299.3" font-size="16" fill="#f4f4f4" textLength="40.3" lengthAdjust="spacingAndGlyphs" >Sortie</text>
<text x="2212.2" y="299.3" font-size="16" fill="#f4f4f4" textLength="54.2" lengthAdjust="spacingAndGlyphs" >Afficher</text>
<rect x="1627" y="305" width="875" height="44.60000000000002" fill="#0078d7" />
<rect x="1859" y="305" width="191" height="44.60000000000002" fill="#1888e0" />
<text x="1634" y="334.1" font-size="16" fill="#ffffff" textLength="26.3" lengthAdjust="spacingAndGlyphs" >C01</text>
<rect x="1794" y="307.5" width="60" height="39.5" fill="#0a20f0" />
<text x="1822" y="335.6" font-size="23" fill="#ffffff" text-anchor="middle" textLength="24.5" lengthAdjust="spacingAndGlyphs" >01</text>
<text x="1866.4" y="334.1" font-size="16" fill="#ffffff" textLength="36.2" lengthAdjust="spacingAndGlyphs" >Multi</text>
<text x="2054.2" y="334.1" font-size="16" fill="#ffffff" textLength="40.1" lengthAdjust="spacingAndGlyphs" >Multi</text>
<rect x="2148.4" y="318" width="26" height="19.8" fill="#00dd00" rx="4" />
<rect x="2168.4" y="314" width="21.4" height="27.8" fill="#e2eae2" rx="9" />
<rect x="2224.6" y="318" width="26" height="19.8" fill="#00dd00" rx="4" />
<rect x="2244.6" y="314" width="21.4" height="27.8" fill="#e2eae2" rx="9" />
<text x="1634" y="378.8" font-size="16" fill="#ffffff" textLength="147" lengthAdjust="spacingAndGlyphs" >Sunday ACRy bLANC</text>
<rect x="1794" y="352.5" width="60" height="39.5" fill="#ff00ff" />
<text x="1822" y="380.3" font-size="23" fill="#ffffff" text-anchor="middle" textLength="24.5" lengthAdjust="spacingAndGlyphs" >07</text>
<defs><linearGradient id="g4" x1="0" y1="0" x2="0" y2="1"><stop offset="0" stop-color="#5c5c5c"/><stop offset="1" stop-color="#4a4a4a"/></linearGradient></defs>
<rect x="1861.5" y="352.1" width="188" height="39.39999999999998" fill="url(#g4)" rx="4" stroke="#2a2a2a" stroke-width="1" />
<path d="M2028 368.8 H2040 L2034 375.3 Z" fill="#cfcfcf" />
<text x="1870.4" y="378.8" font-size="16" fill="#ffffff" textLength="87.1" lengthAdjust="spacingAndGlyphs" >Remplissage</text>
<text x="2054.2" y="378.8" font-size="16" fill="#ffffff" textLength="72.4" lengthAdjust="spacingAndGlyphs" >4 500 / 40</text>
<rect x="2148.4" y="361.9" width="26" height="19.8" fill="#00dd00" rx="4" />
<rect x="2168.4" y="357.9" width="21.4" height="27.8" fill="#e2eae2" rx="9" />
<rect x="2224.6" y="361.9" width="26" height="19.8" fill="#00dd00" rx="4" />
<rect x="2244.6" y="357.9" width="21.4" height="27.8" fill="#e2eae2" rx="9" />
<text x="1634" y="422.8" font-size="16" fill="#ffffff" textLength="26.3" lengthAdjust="spacingAndGlyphs" >C08</text>
<rect x="1794" y="396.5" width="60" height="39.5" fill="#b9b9b9" />
<text x="1822" y="424.3" font-size="23" fill="#000000" text-anchor="middle" textLength="24.5" lengthAdjust="spacingAndGlyphs" >08</text>
<defs><linearGradient id="g5" x1="0" y1="0" x2="0" y2="1"><stop offset="0" stop-color="#5c5c5c"/><stop offset="1" stop-color="#4a4a4a"/></linearGradient></defs>
<rect x="1861.5" y="396.1" width="188" height="39.39999999999998" fill="url(#g5)" rx="4" stroke="#2a2a2a" stroke-width="1" />
<path d="M2028 412.8 H2040 L2034 419.3 Z" fill="#cfcfcf" />
<text x="1870.4" y="422.8" font-size="16" fill="#ffffff" textLength="87.1" lengthAdjust="spacingAndGlyphs" >Remplissage</text>
<text x="2054.2" y="422.8" font-size="16" fill="#ffffff" textLength="72.4" lengthAdjust="spacingAndGlyphs" >4 200 / 40</text>
<rect x="2148.4" y="405.7" width="26" height="19.8" fill="#00dd00" rx="4" />
<rect x="2168.4" y="401.7" width="21.4" height="27.8" fill="#e2eae2" rx="9" />
<rect x="2224.6" y="405.7" width="26" height="19.8" fill="#00dd00" rx="4" />
<rect x="2244.6" y="401.7" width="21.4" height="27.8" fill="#e2eae2" rx="9" />
<text x="1634" y="466.8" font-size="16" fill="#ffffff" textLength="26.3" lengthAdjust="spacingAndGlyphs" >C00</text>
<rect x="1794" y="440.5" width="60" height="39.5" fill="#000000" />
<text x="1822" y="468.3" font-size="23" fill="#ffffff" text-anchor="middle" textLength="24.5" lengthAdjust="spacingAndGlyphs" >00</text>
<defs><linearGradient id="g6" x1="0" y1="0" x2="0" y2="1"><stop offset="0" stop-color="#5c5c5c"/><stop offset="1" stop-color="#4a4a4a"/></linearGradient></defs>
<rect x="1861.5" y="440.1" width="188" height="39.39999999999998" fill="url(#g6)" rx="4" stroke="#2a2a2a" stroke-width="1" />
<path d="M2028 456.8 H2040 L2034 463.3 Z" fill="#cfcfcf" />
<text x="1870.4" y="466.8" font-size="16" fill="#ffffff" textLength="87.1" lengthAdjust="spacingAndGlyphs" >Remplissage</text>
<text x="2054.2" y="466.8" font-size="16" fill="#ffffff" textLength="72.4" lengthAdjust="spacingAndGlyphs" >4 000 / 20</text>
<rect x="2162.4" y="450.2" width="26" height="19.8" fill="#8b0000" rx="4" />
<rect x="2146.4" y="446.2" width="21.4" height="27.8" fill="#ddd6d6" rx="9" />
<rect x="2224.6" y="450.2" width="26" height="19.8" fill="#00dd00" rx="4" />
<rect x="2244.6" y="446.2" width="21.4" height="27.8" fill="#e2eae2" rx="9" />
<rect x="2509" y="314.5" width="46" height="26.80000000000001" fill="#474747" rx="4" stroke="#2a2a2a" stroke-width="1.2" />
<rect x="2509" y="346.9" width="46" height="28.200000000000045" fill="#474747" rx="4" stroke="#2a2a2a" stroke-width="1.2" />
<rect x="2509" y="412.5" width="46" height="39" fill="#474747" rx="4" stroke="#2a2a2a" stroke-width="1.2" />
<rect x="2509" y="491.2" width="46" height="37.900000000000034" fill="#474747" rx="4" stroke="#2a2a2a" stroke-width="1.2" />
<rect x="2509" y="534.5" width="46" height="38.5" fill="#474747" rx="4" stroke="#2a2a2a" stroke-width="1.2" />
<path d="M2523.5 333.5 L2532 325 L2540.5 333.5" fill="none" stroke="#ffffff" stroke-width="3.6" />
<path d="M2523.5 356.5 L2532 365 L2540.5 356.5" fill="none" stroke="#ffffff" stroke-width="3.6" />
<g transform="translate(2518,417)" fill="none" stroke="#ffffff"><path d="M1 6 H27" stroke-width="2.6"/><path d="M10 6 V2.5 Q10 1 11.5 1 H16.5 Q18 1 18 2.5 V6" stroke-width="2"/><path d="M4 9 L5 28.5 Q5 30 6.5 30 H21.5 Q23 30 23 28.5 L24 9" stroke-width="2.6"/><path d="M10.5 12 V26 M14 12 V26 M17.5 12 V26" stroke-width="2"/></g>
<g transform="translate(2517,495)" fill="none" stroke="#ffffff" stroke-width="2.2"><path d="M4 1.5 H12 L15 4.5 M9 24 H4 Q1.5 24 1.5 21.5 V4 Q1.5 1.5 4 1.5"/><path d="M11 8 H20 L26 14 V27 Q26 29 24 29 H11 Q9 29 9 27 V10 Q9 8 11 8 Z"/><path d="M13 17 H22 M13 21 H22 M13 25 H22" stroke-width="1.6"/></g>
<g transform="translate(2517,538)"><rect x="1" y="5" width="20" height="27" rx="3" fill="#ffffff"/><rect x="6" y="1" width="10" height="7" rx="2" fill="#ffffff" stroke="#474747" stroke-width="2"/><path d="M11 12 H21 L27 18 V31 Q27 33 25 33 H11 Z" fill="#ffffff" stroke="#474747" stroke-width="2"/><path d="M14 21 H24 M14 25 H24 M14 29 H24" stroke="#474747" stroke-width="1.7"/></g>
<rect x="1629.5" y="621.5" width="940" height="224.5" fill="#1e1e1e" rx="6" stroke="#2e2e2e" stroke-width="1.6" />
<path d="M1642.5 667 V634 Q1642.5 630.7 1646 630.7 H1753.5 Q1757 630.7 1757 634 V667" fill="#1f1f1f" stroke="#3d3d3d" stroke-width="1.2" />
<path d="M1762 669 V638 Q1762 634.5 1765.5 634.5 H1873.5 Q1877 634.5 1877 638 V669 H1762" fill="#1e1e1e" stroke="#3d3d3d" stroke-width="1.2" />
<rect x="1658.5" y="637" width="23" height="22.5" fill="none" stroke="#f0f0f0" stroke-width="1.5" />
<text x="1690.9" y="656.3" font-size="16" fill="#ffffff" textLength="50" lengthAdjust="spacingAndGlyphs" >1 Ligne</text>
<rect x="1778.5" y="639" width="23" height="22.5" fill="none" stroke="#f0f0f0" stroke-width="1.5" />
<text x="1810.4" y="658.6" font-size="16" fill="#ffffff" textLength="50.7" lengthAdjust="spacingAndGlyphs" >2 Ligne</text>
<text x="2026" y="699.5" font-size="16" fill="#ffffff" textLength="127.7" lengthAdjust="spacingAndGlyphs" >Couleur de calque</text>
<text x="2005.8" y="741.5" font-size="16" fill="#ffffff" textLength="147.9" lengthAdjust="spacingAndGlyphs" >Nombre de passages</text>
<text x="2048.2" y="783.5" font-size="16" fill="#8c8c8c" textLength="105.5" lengthAdjust="spacingAndGlyphs" >Intervalle (mm)</text>
<rect x="2167" y="673.7" width="109.8" height="36.3" fill="#0000ff" stroke="#ffffff" stroke-width="2" />
<rect x="2167.5" y="719.0" width="108" height="30.5" fill="#1b1b1b" rx="3" stroke="#111111" stroke-width="1" />
<path d="M2257 719.5 H2272 Q2275 719.5 2275 722.5 V746 Q2275 749 2272 749 H2257 Z" fill="#4a4a4a" />
<rect x="2257" y="719.5" width="1" height="29.5" fill="#3a3a3a" />
<path d="M2260.5 731.75 L2266.5 725.75 L2272.5 731.75 Z" fill="#959595" />
<path d="M2260.5 736.75 L2266.5 742.75 L2272.5 736.75 Z" fill="#959595" />
<text x="2244.3" y="741.5" font-size="16" fill="#e8e8e8" text-anchor="end" >1</text>
<rect x="2167.5" y="761.0" width="108" height="30.700000000000045" fill="#1b1b1b" rx="3" stroke="#111111" stroke-width="1" />
<path d="M2257 761.5 H2272 Q2275 761.5 2275 764.5 V788.2 Q2275 791.2 2272 791.2 H2257 Z" fill="#3d3d3d" />
<rect x="2257" y="761.5" width="1" height="29.700000000000045" fill="#3a3a3a" />
<path d="M2260.5 773.85 L2266.5 767.85 L2272.5 773.85 Z" fill="#6a6a6a" />
<path d="M2260.5 778.85 L2266.5 784.85 L2272.5 778.85 Z" fill="#6a6a6a" />
<text x="2244.3" y="783.5" font-size="16" fill="#8c8c8c" text-anchor="end" textLength="37.5" lengthAdjust="spacingAndGlyphs" >0,020</text>
<text x="2316" y="699.5" font-size="16" fill="#ffffff" textLength="103.7" lengthAdjust="spacingAndGlyphs" >Vitesse (mm/s)</text>
<text x="2291.3" y="741.5" font-size="16" fill="#ffffff" textLength="128.4" lengthAdjust="spacingAndGlyphs" >Puissance max (%)</text>
<text x="2306.6" y="825.4" font-size="16" fill="#ffffff" textLength="113.1" lengthAdjust="spacingAndGlyphs" >Fréquence (kHz)</text>
<rect x="2434.5" y="677.0" width="106.80000000000018" height="30.5" fill="#1b1b1b" rx="3" stroke="#111111" stroke-width="1" />
<path d="M2522.8 677.5 H2537.8 Q2540.8 677.5 2540.8 680.5 V704 Q2540.8 707 2537.8 707 H2522.8 Z" fill="#4a4a4a" />
<rect x="2522.8" y="677.5" width="1" height="29.5" fill="#3a3a3a" />
<path d="M2526.3 689.75 L2532.3 683.75 L2538.3 689.75 Z" fill="#959595" />
<path d="M2526.3 694.75 L2532.3 700.75 L2538.3 694.75 Z" fill="#959595" />
<text x="2509.6" y="699.5" font-size="16" fill="#e8e8e8" text-anchor="end" textLength="37" lengthAdjust="spacingAndGlyphs" >30,00</text>
<rect x="2434.5" y="719.0" width="106.80000000000018" height="30.5" fill="#1b1b1b" rx="3" stroke="#111111" stroke-width="1" />
<path d="M2522.8 719.5 H2537.8 Q2540.8 719.5 2540.8 722.5 V746 Q2540.8 749 2537.8 749 H2522.8 Z" fill="#4a4a4a" />
<rect x="2522.8" y="719.5" width="1" height="29.5" fill="#3a3a3a" />
<path d="M2526.3 731.75 L2532.3 725.75 L2538.3 731.75 Z" fill="#959595" />
<path d="M2526.3 736.75 L2532.3 742.75 L2538.3 736.75 Z" fill="#959595" />
<text x="2509.6" y="741.5" font-size="16" fill="#e8e8e8" text-anchor="end" textLength="37.6" lengthAdjust="spacingAndGlyphs" >40,00</text>
<rect x="2434.5" y="802.9" width="106.80000000000018" height="30.600000000000023" fill="#1b1b1b" rx="3" stroke="#111111" stroke-width="1" />
<path d="M2522.8 803.4 H2537.8 Q2540.8 803.4 2540.8 806.4 V830 Q2540.8 833 2537.8 833 H2522.8 Z" fill="#4a4a4a" />
<rect x="2522.8" y="803.4" width="1" height="29.600000000000023" fill="#3a3a3a" />
<path d="M2526.3 815.7 L2532.3 809.7 L2538.3 815.7 Z" fill="#959595" />
<path d="M2526.3 820.7 L2532.3 826.7 L2538.3 820.7 Z" fill="#959595" />
<text x="2509.6" y="825.4" font-size="16" fill="#e8e8e8" text-anchor="end" textLength="28.6" lengthAdjust="spacingAndGlyphs" >10,0</text>
<rect x="1620" y="820" width="3" height="3" fill="#5a5a5a" />
<rect x="1620" y="825" width="3" height="3" fill="#5a5a5a" />
<rect x="1620" y="830" width="3" height="3" fill="#5a5a5a" />
<rect x="1620" y="835" width="3" height="3" fill="#5a5a5a" />
<rect x="1620" y="840" width="3" height="3" fill="#5a5a5a" />
<rect x="1620" y="845" width="3" height="3" fill="#5a5a5a" />
<defs><linearGradient id="hdr2" x1="0" y1="0" x2="1" y2="0"><stop offset="0" stop-color="#000000"/><stop offset="0.12" stop-color="#1a0606"/><stop offset="0.3" stop-color="#5a1a1a"/><stop offset="0.47" stop-color="#9a2a2a"/><stop offset="0.61" stop-color="#c23535"/><stop offset="0.82" stop-color="#d2572f"/><stop offset="1" stop-color="#df7a30"/></linearGradient></defs>
<rect x="1624" y="852" width="935" height="20" fill="url(#hdr2)" />
<text x="1636" y="862.2" font-size="16" fill="#ffffff" textLength="35.8" lengthAdjust="spacingAndGlyphs" >Laser</text>
<rect x="2514" y="852" width="16" height="14" fill="none" stroke="#b07050" stroke-width="1.2" opacity="0.6"/>
<rect x="2541" y="852" width="16" height="14" fill="none" stroke="#b07050" stroke-width="1.2" opacity="0.6"/>
<text x="1626.4" y="898.7" font-size="16" fill="#ffffff" textLength="94.6" lengthAdjust="spacingAndGlyphs" >Disconnected</text>
<defs><linearGradient id="g7" x1="0" y1="0" x2="0" y2="1"><stop offset="0" stop-color="#575757"/><stop offset="1" stop-color="#4a4a4a"/></linearGradient></defs>
<rect x="1628.5" y="916.5" width="300.79999999999995" height="108.40000000000009" fill="url(#g7)" rx="4" stroke="#262626" stroke-width="1.2" />
<defs><linearGradient id="g8" x1="0" y1="0" x2="0" y2="1"><stop offset="0" stop-color="#575757"/><stop offset="1" stop-color="#4a4a4a"/></linearGradient></defs>
<rect x="1940.5" y="916.5" width="302.4000000000001" height="108.40000000000009" fill="url(#g8)" rx="4" stroke="#262626" stroke-width="1.2" />
<defs><linearGradient id="g9" x1="0" y1="0" x2="0" y2="1"><stop offset="0" stop-color="#575757"/><stop offset="1" stop-color="#4a4a4a"/></linearGradient></defs>
<rect x="2254.5" y="916.5" width="300.5999999999999" height="108.40000000000009" fill="url(#g9)" rx="4" stroke="#262626" stroke-width="1.2" />
<defs><linearGradient id="g10" x1="0" y1="0" x2="0" y2="1"><stop offset="0" stop-color="#575757"/><stop offset="1" stop-color="#4a4a4a"/></linearGradient></defs>
<rect x="1628.5" y="1032.5" width="458.6999999999998" height="110.70000000000005" fill="url(#g10)" rx="4" stroke="#262626" stroke-width="1.2" />
<defs><linearGradient id="g11" x1="0" y1="0" x2="0" y2="1"><stop offset="0" stop-color="#575757"/><stop offset="1" stop-color="#4a4a4a"/></linearGradient></defs>
<rect x="2098.9" y="1032.5" width="456.1999999999998" height="110.70000000000005" fill="url(#g11)" rx="4" stroke="#262626" stroke-width="1.2" />
<rect x="1725.6" y="957.9" width="8.3" height="24" fill="#ffffff" rx="1.5" />
<rect x="1738.3" y="957.9" width="8.3" height="24" fill="#ffffff" rx="1.5" />
<text x="1752" y="978" font-size="16" fill="#ffffff" textLength="74.4" lengthAdjust="spacingAndGlyphs" >Suspendre</text>
<rect x="2049.7" y="958.6" width="24" height="23.3" fill="#ffffff" rx="1" />
<text x="2078.3" y="978" font-size="16" fill="#ffffff" textLength="48.9" lengthAdjust="spacingAndGlyphs" >Arrêter</text>
<path d="M2355 957.9 L2377.2 970.3 L2355 982.7 Z" fill="#ffffff" />
<text x="2382.9" y="978" font-size="16" fill="#ffffff" textLength="65.6" lengthAdjust="spacingAndGlyphs" >Démarrer</text>
<g transform="translate(1818,1076.2)" fill="none" stroke="#ffffff" stroke-width="3"><path d="M1.5 8 V1.5 H8 M16 1.5 H22.2 V8 M22.2 16 V22.5 H16 M8 22.5 H1.5 V16"/></g>
<text x="1846.6" y="1095.3" font-size="16" fill="#ffffff" textLength="46.6" lengthAdjust="spacingAndGlyphs" >Cadrer</text>
<circle cx="2298.3" cy="1088.2" r="10.5" fill="none" stroke="#ffffff" stroke-width="2.6" stroke-dasharray="5.5 3"/>
<text x="2314.2" y="1095.3" font-size="16" fill="#ffffff" textLength="46.9" lengthAdjust="spacingAndGlyphs" >Cadrer</text>
<rect x="1640" y="1159" width="17.5" height="13.5" fill="#8b0000" rx="3" />
<rect x="1626" y="1156" width="16.5" height="19.5" fill="#ddd6d6" rx="5" />
<text x="1666" y="1172.7" font-size="16" fill="#ffffff" textLength="249.3" lengthAdjust="spacingAndGlyphs" >Couper les graphiques sélectionnés</text>
<defs><linearGradient id="g12" x1="0" y1="0" x2="0" y2="1"><stop offset="0" stop-color="#4f4f4f"/><stop offset="1" stop-color="#474747"/></linearGradient></defs>
<rect x="2100.5" y="1151.0" width="454.5999999999999" height="29.5" fill="url(#g12)" rx="4" stroke="#262626" stroke-width="1.2" />
<path d="M2226 1156 V1162 M2226 1172 V1178 M2215 1167 H2221 M2231 1167 H2237" fill="none" stroke="#ffffff" stroke-width="2" />
<path d="M2226 1162.5 V1171.5 M2221.5 1167 H2230.5" fill="none" stroke="#ff2020" stroke-width="2.6" />
<text x="2242.4" y="1172.7" font-size="16" fill="#ffffff" textLength="194.7" lengthAdjust="spacingAndGlyphs" >Afficher la dernière position</text>
<defs><linearGradient id="g13" x1="0" y1="0" x2="0" y2="1"><stop offset="0" stop-color="#4f4f4f"/><stop offset="1" stop-color="#474747"/></linearGradient></defs>
<rect x="2100.5" y="1187.3" width="454.5999999999999" height="27.600000000000136" fill="url(#g13)" rx="4" stroke="#262626" stroke-width="1.2" />
<text x="2236" y="1207.9" font-size="16" fill="#ffffff" textLength="183.9" lengthAdjust="spacingAndGlyphs" >Paramètres d&#x27;optimisation</text>
<defs><linearGradient id="g14" x1="0" y1="0" x2="0" y2="1"><stop offset="0" stop-color="#535353"/><stop offset="1" stop-color="#474747"/></linearGradient></defs>
<rect x="1628.5" y="1226.5" width="154.5999999999999" height="29" fill="url(#g14)" rx="4" stroke="#262626" stroke-width="1.2" />
<text x="1673" y="1247.7" font-size="16" fill="#ffffff" textLength="65.6" lengthAdjust="spacingAndGlyphs" >Appareils</text>
<defs><linearGradient id="g15" x1="0" y1="0" x2="0" y2="1"><stop offset="0" stop-color="#5c5c5c"/><stop offset="1" stop-color="#4a4a4a"/></linearGradient></defs>
<rect x="1800.5" y="1222.5" width="368.8000000000002" height="38" fill="url(#g15)" rx="4" stroke="#2a2a2a" stroke-width="1" />
<path d="M2147.9 1238.5 H2159.9 L2153.9 1245.0 Z" fill="#dcdcdc" />
<text x="1808.5" y="1248.8" font-size="16" fill="#ffffff" textLength="42.7" lengthAdjust="spacingAndGlyphs" >(Auto)</text>
<defs><linearGradient id="g16" x1="0" y1="0" x2="0" y2="1"><stop offset="0" stop-color="#5c5c5c"/><stop offset="1" stop-color="#4a4a4a"/></linearGradient></defs>
<rect x="2186.5" y="1222.5" width="368.5999999999999" height="38" fill="url(#g16)" rx="4" stroke="#2a2a2a" stroke-width="1" />
<path d="M2534 1238.5 H2546 L2540 1245.0 Z" fill="#dcdcdc" />
<path d="M2197 1235 Q2206 1231 2215 1235 V1244 Q2215 1251 2206 1254 Q2197 1251 2197 1244 Z" fill="#1a1a1a" stroke="#d4a020" stroke-width="1.5" />
<circle cx="2206" cy="1245" r="4.5" fill="#f0a020"/>
<text x="2223.7" y="1248.8" font-size="16" fill="#ffffff" textLength="122.9" lengthAdjust="spacingAndGlyphs" >JCZFiber 140x140</text>
<rect x="1624" y="1383.5" width="935" height="1" fill="#282828" />
<path d="M1626.5 1419 V1388 Q1626.5 1385 1629.5 1385 H1691.5 Q1694.5 1385 1694.5 1388 V1419" fill="#1e1e1e" stroke="#4a4a4a" stroke-width="1.2" />
<text x="1643.2" y="1410" font-size="16" fill="#ffffff" textLength="35.5" lengthAdjust="spacingAndGlyphs" >Laser</text>
<path d="M1700.5 1415 V1390 Q1700.5 1387 1703.5 1387 H1913.5 Q1916.5 1387 1916.5 1390 V1415 H1700.5" fill="#1e1e1e" stroke="#4a4a4a" stroke-width="1.2" />
<text x="1716.9" y="1408" font-size="16" fill="#ffffff" textLength="185.1" lengthAdjust="spacingAndGlyphs" >Bibliothèque de matériaux</text>
<rect x="3.0" y="1434.0" width="3" height="3" fill="#5f5f5f" />
<rect x="8.3" y="1434.0" width="3" height="3" fill="#5f5f5f" />
<rect x="3.0" y="1439.3" width="3" height="3" fill="#5f5f5f" />
<rect x="8.3" y="1439.3" width="3" height="3" fill="#5f5f5f" />
<rect x="3.0" y="1444.6" width="3" height="3" fill="#5f5f5f" />
<rect x="8.3" y="1444.6" width="3" height="3" fill="#5f5f5f" />
<rect x="3.0" y="1449.9" width="3" height="3" fill="#5f5f5f" />
<rect x="8.3" y="1449.9" width="3" height="3" fill="#5f5f5f" />
<rect x="3.0" y="1455.2" width="3" height="3" fill="#5f5f5f" />
<rect x="8.3" y="1455.2" width="3" height="3" fill="#5f5f5f" />
<rect x="3.0" y="1460.5" width="3" height="3" fill="#5f5f5f" />
<rect x="8.3" y="1460.5" width="3" height="3" fill="#5f5f5f" />
<rect x="3.0" y="1465.8" width="3" height="3" fill="#5f5f5f" />
<rect x="8.3" y="1465.8" width="3" height="3" fill="#5f5f5f" />
<rect x="19" y="1429.5" width="50.5" height="47.5" fill="#3a3a3a" rx="4" stroke="#555555" stroke-width="2" />
<rect x="24" y="1432.5" width="40" height="40" fill="#000000" />
<text x="44" y="1459" font-size="20.5" fill="#fff" text-anchor="middle" textLength="25" lengthAdjust="spacingAndGlyphs" >00</text>
<rect x="80" y="1432.5" width="40" height="40" fill="#0000ff" />
<text x="100" y="1459" font-size="20.5" fill="#fff" text-anchor="middle" textLength="25" lengthAdjust="spacingAndGlyphs" >01</text>
<rect x="136" y="1432.5" width="40" height="40" fill="#ff0000" />
<text x="156" y="1459" font-size="20.5" fill="#fff" text-anchor="middle" textLength="25" lengthAdjust="spacingAndGlyphs" >02</text>
<rect x="192" y="1432.5" width="40" height="40" fill="#00e000" />
<text x="212" y="1459" font-size="20.5" fill="#000" text-anchor="middle" textLength="25" lengthAdjust="spacingAndGlyphs" >03</text>
<rect x="248" y="1432.5" width="40" height="40" fill="#d0d000" />
<text x="268" y="1459" font-size="20.5" fill="#000" text-anchor="middle" textLength="25" lengthAdjust="spacingAndGlyphs" >04</text>
<rect x="304" y="1432.5" width="40" height="40" fill="#ff8000" />
<text x="324" y="1459" font-size="20.5" fill="#000" text-anchor="middle" textLength="25" lengthAdjust="spacingAndGlyphs" >05</text>
<rect x="360" y="1432.5" width="40" height="40" fill="#00e0e0" />
<text x="380" y="1459" font-size="20.5" fill="#000" text-anchor="middle" textLength="25" lengthAdjust="spacingAndGlyphs" >06</text>
<rect x="416" y="1432.5" width="40" height="40" fill="#ff00ff" />
<text x="436" y="1459" font-size="20.5" fill="#fff" text-anchor="middle" textLength="25" lengthAdjust="spacingAndGlyphs" >07</text>
<rect x="472" y="1432.5" width="40" height="40" fill="#b4b4b4" />
<text x="492" y="1459" font-size="20.5" fill="#000" text-anchor="middle" textLength="25" lengthAdjust="spacingAndGlyphs" >08</text>
<rect x="528" y="1432.5" width="40" height="40" fill="#0000a0" />
<text x="548" y="1459" font-size="20.5" fill="#fff" text-anchor="middle" textLength="25" lengthAdjust="spacingAndGlyphs" >09</text>
<rect x="584" y="1432.5" width="40" height="40" fill="#a00000" />
<text x="604" y="1459" font-size="20.5" fill="#fff" text-anchor="middle" textLength="25" lengthAdjust="spacingAndGlyphs" >10</text>
<rect x="640" y="1432.5" width="40" height="40" fill="#00a000" />
<text x="660" y="1459" font-size="20.5" fill="#fff" text-anchor="middle" textLength="25" lengthAdjust="spacingAndGlyphs" >11</text>
<rect x="696" y="1432.5" width="40" height="40" fill="#a0a000" />
<text x="716" y="1459" font-size="20.5" fill="#000" text-anchor="middle" textLength="25" lengthAdjust="spacingAndGlyphs" >12</text>
<rect x="752" y="1432.5" width="40" height="40" fill="#c08000" />
<text x="772" y="1459" font-size="20.5" fill="#000" text-anchor="middle" textLength="25" lengthAdjust="spacingAndGlyphs" >13</text>
<rect x="808" y="1432.5" width="40" height="40" fill="#00a0ff" />
<text x="828" y="1459" font-size="20.5" fill="#fff" text-anchor="middle" textLength="25" lengthAdjust="spacingAndGlyphs" >14</text>
<rect x="864" y="1432.5" width="40" height="40" fill="#a000a0" />
<text x="884" y="1459" font-size="20.5" fill="#fff" text-anchor="middle" textLength="25" lengthAdjust="spacingAndGlyphs" >15</text>
<rect x="920" y="1432.5" width="40" height="40" fill="#808080" />
<text x="940" y="1459" font-size="20.5" fill="#fff" text-anchor="middle" textLength="25" lengthAdjust="spacingAndGlyphs" >16</text>
<rect x="976" y="1432.5" width="40" height="40" fill="#7d87b9" />
<text x="996" y="1459" font-size="20.5" fill="#000" text-anchor="middle" textLength="25" lengthAdjust="spacingAndGlyphs" >17</text>
<rect x="1032" y="1432.5" width="40" height="40" fill="#bb7784" />
<text x="1052" y="1459" font-size="20.5" fill="#000" text-anchor="middle" textLength="25" lengthAdjust="spacingAndGlyphs" >18</text>
<rect x="1088" y="1432.5" width="40" height="40" fill="#4a6fe3" />
<text x="1108" y="1459" font-size="20.5" fill="#fff" text-anchor="middle" textLength="25" lengthAdjust="spacingAndGlyphs" >19</text>
<rect x="1144" y="1432.5" width="40" height="40" fill="#d33f6a" />
<text x="1164" y="1459" font-size="20.5" fill="#fff" text-anchor="middle" textLength="25" lengthAdjust="spacingAndGlyphs" >20</text>
<rect x="1200" y="1432.5" width="40" height="40" fill="#8cd78c" />
<text x="1220" y="1459" font-size="20.5" fill="#000" text-anchor="middle" textLength="25" lengthAdjust="spacingAndGlyphs" >21</text>
<rect x="1256" y="1432.5" width="40" height="40" fill="#f0b98d" />
<text x="1276" y="1459" font-size="20.5" fill="#000" text-anchor="middle" textLength="25" lengthAdjust="spacingAndGlyphs" >22</text>
<rect x="1312" y="1432.5" width="40" height="40" fill="#f6c4e1" />
<text x="1332" y="1459" font-size="20.5" fill="#000" text-anchor="middle" textLength="25" lengthAdjust="spacingAndGlyphs" >23</text>
<rect x="1368" y="1432.5" width="40" height="40" fill="#fa9ed4" />
<text x="1388" y="1459" font-size="20.5" fill="#000" text-anchor="middle" textLength="25" lengthAdjust="spacingAndGlyphs" >24</text>
<rect x="1424" y="1432.5" width="40" height="40" fill="#500a78" />
<text x="1444" y="1459" font-size="20.5" fill="#fff" text-anchor="middle" textLength="25" lengthAdjust="spacingAndGlyphs" >25</text>
<rect x="1480" y="1432.5" width="40" height="40" fill="#b45a00" />
<text x="1500" y="1459" font-size="20.5" fill="#fff" text-anchor="middle" textLength="25" lengthAdjust="spacingAndGlyphs" >26</text>
<rect x="1536" y="1432.5" width="40" height="40" fill="#004754" />
<text x="1556" y="1459" font-size="20.5" fill="#fff" text-anchor="middle" textLength="25" lengthAdjust="spacingAndGlyphs" >27</text>
<rect x="1592" y="1432.5" width="40" height="40" fill="#86fa88" />
<text x="1612" y="1459" font-size="20.5" fill="#000" text-anchor="middle" textLength="25" lengthAdjust="spacingAndGlyphs" >28</text>
<rect x="1648" y="1432.5" width="40" height="40" fill="#ffdb66" />
<text x="1668" y="1459" font-size="20.5" fill="#000" text-anchor="middle" textLength="25" lengthAdjust="spacingAndGlyphs" >29</text>
<rect x="1700" y="1436" width="1" height="32" fill="#2a2a2a" />
<rect x="1712" y="1432.5" width="40" height="40" fill="#f36926" />
<text x="1732" y="1459" font-size="20.5" fill="#000" text-anchor="middle" textLength="24" lengthAdjust="spacingAndGlyphs" >T1</text>
<rect x="1768" y="1432.5" width="40" height="40" fill="#0c96d9" />
<text x="1788" y="1459" font-size="20.5" fill="#fff" text-anchor="middle" textLength="24" lengthAdjust="spacingAndGlyphs" >T2</text>
<rect x="6.4" y="1500" width="18" height="13" fill="#00dd00" rx="2" />
<rect x="19.9" y="1496.5" width="16.5" height="19.5" fill="#e0e6e0" rx="5" />
<text x="44.2" y="1514.4" font-size="16" fill="#f0f0f0" textLength="61.5" lengthAdjust="spacingAndGlyphs" >Déplacer</text>
<rect x="131.3" y="1500" width="18" height="13" fill="#00dd00" rx="2" />
<rect x="144.8" y="1496.5" width="16.5" height="19.5" fill="#e0e6e0" rx="5" />
<text x="170.1" y="1514.4" font-size="16" fill="#f0f0f0" textLength="74.9" lengthAdjust="spacingAndGlyphs" >Dimension</text>
<rect x="272.4" y="1500" width="18" height="13" fill="#00dd00" rx="2" />
<rect x="285.9" y="1496.5" width="16.5" height="19.5" fill="#e0e6e0" rx="5" />
<text x="310.2" y="1514.4" font-size="16" fill="#f0f0f0" textLength="86.8" lengthAdjust="spacingAndGlyphs" >Faire pivoter</text>
<rect x="422" y="1500" width="18" height="13" fill="#00dd00" rx="2" />
<rect x="435.5" y="1496.5" width="16.5" height="19.5" fill="#e0e6e0" rx="5" />
<text x="460.4" y="1514.4" font-size="16" fill="#f0f0f0" textLength="84.3" lengthAdjust="spacingAndGlyphs" >Cisaillement</text>
<text x="581.6" y="1514.4" font-size="16" fill="#f0f0f0" textLength="145.9" lengthAdjust="spacingAndGlyphs" >x: 76,00, y: 85,00 mm</text>
<text x="1345" y="1514.4" font-size="16" fill="#f0f0f0" textLength="235.3" lengthAdjust="spacingAndGlyphs" >Projet chargé en 37 millisecondes</text>
</svg></body></html>
